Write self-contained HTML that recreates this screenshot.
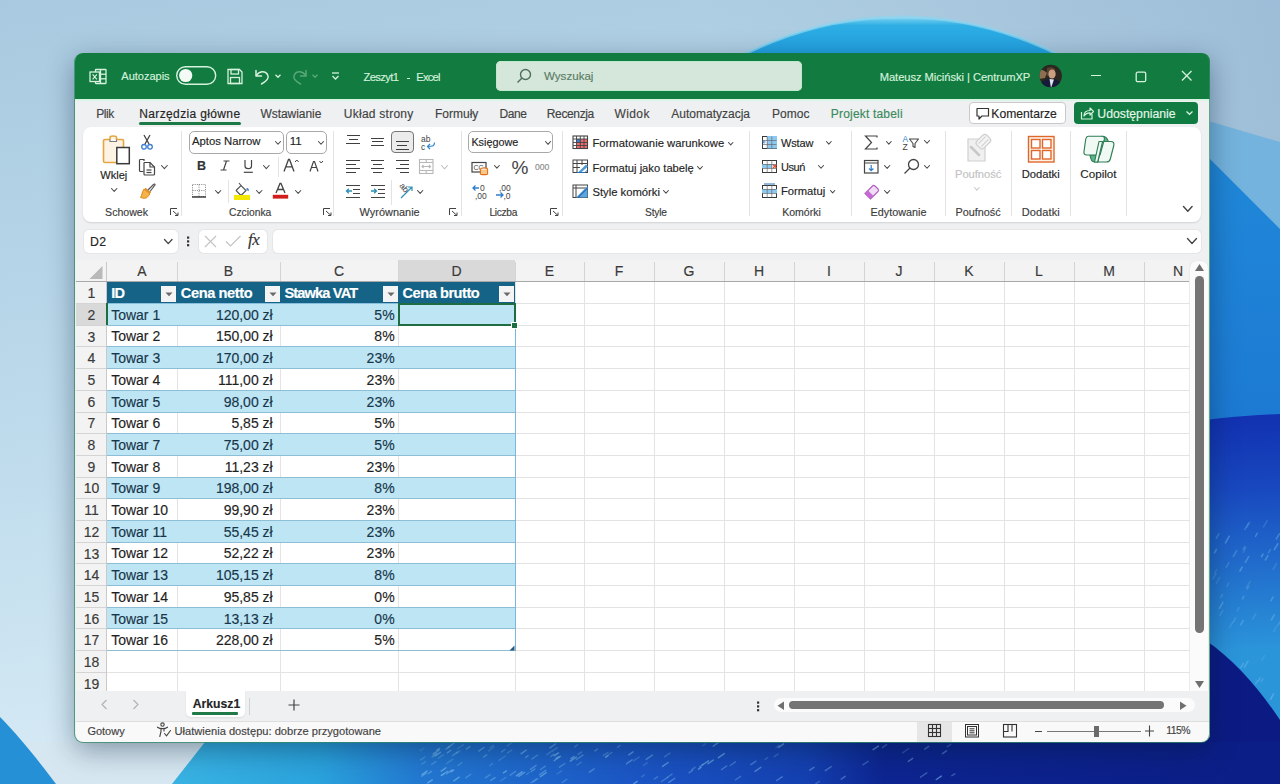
<!DOCTYPE html>
<html><head><meta charset="utf-8"><title>Excel</title>
<style>
html,body{margin:0;padding:0;}
body{width:1280px;height:784px;position:relative;overflow:hidden;font-family:"Liberation Sans",sans-serif;background:#b8d4e8;}
.r{position:absolute;}
.t{position:absolute;white-space:nowrap;line-height:normal;font-family:"Liberation Sans",sans-serif;-webkit-text-stroke:0.15px currentColor;}
svg.r{overflow:visible;}
</style></head><body>
<svg class="r" style="left:0;top:0" width="1280" height="784" viewBox="0 0 1280 784">
<defs>
<linearGradient id="bg0" x1="0" y1="0" x2="0.25" y2="1">
 <stop offset="0" stop-color="#a8c9df"/><stop offset="0.5" stop-color="#bcdaeb"/><stop offset="1" stop-color="#d9ecf6"/>
</linearGradient>
<linearGradient id="bgR" x1="0" y1="0" x2="1" y2="0">
 <stop offset="0" stop-color="#9dbbd5" stop-opacity="0"/><stop offset="0.55" stop-color="#9dbbd5" stop-opacity="0"/><stop offset="1" stop-color="#98b8d4" stop-opacity="0.8"/>
</linearGradient>
<linearGradient id="arcG" gradientUnits="userSpaceOnUse" x1="0" y1="17" x2="0" y2="60">
 <stop offset="0" stop-color="#9adbf2"/><stop offset="0.08" stop-color="#5cc4ec"/><stop offset="0.2" stop-color="#2eaee4"/><stop offset="1" stop-color="#1e9ddf"/>
</linearGradient>
<linearGradient id="p2" x1="0" y1="0" x2="0" y2="1">
 <stop offset="0" stop-color="#2088d8"/><stop offset="1" stop-color="#1766cc"/>
</linearGradient>
<linearGradient id="p3" gradientUnits="userSpaceOnUse" x1="1240" y1="420" x2="1250" y2="650">
 <stop offset="0" stop-color="#1232b2"/><stop offset="0.3" stop-color="#1848bf"/><stop offset="1" stop-color="#2b95da"/>
</linearGradient>
<linearGradient id="botB" x1="0" y1="0" x2="1" y2="0">
 <stop offset="0" stop-color="#2a9ad8"/><stop offset="0.14" stop-color="#38b2e2"/><stop offset="0.25" stop-color="#2aa2dc"/><stop offset="0.33" stop-color="#2277d0"/><stop offset="0.5" stop-color="#1b55c4"/><stop offset="0.63" stop-color="#1440b0"/><stop offset="0.69" stop-color="#0d2590"/><stop offset="1" stop-color="#0b1d86"/>
</linearGradient>
</defs>
<rect width="1280" height="784" fill="url(#bg0)"/>
<rect x="0" y="0" width="1280" height="784" fill="url(#bgR)"/>
<circle cx="901" cy="364" r="347" fill="url(#arcG)" stroke="#8ed4ef" stroke-width="3" stroke-opacity="0.75"/>
<path d="M1205 120 L1280 142 L1280 784 L1205 784 Z" fill="#74b3dd"/>
<path d="M1205 154 L1280 229 L1280 784 L1205 784 Z" fill="url(#p2)"/>
<path d="M1205 420 C1230 417 1255 415 1280 414 L1280 784 L1205 784 Z" fill="url(#p3)"/>
<path d="M1205 640 C1235 660 1260 690 1280 720 L1280 784 L1205 784 Z" fill="#0c1b84"/>
<rect x="0" y="742" width="1280" height="42" fill="url(#botB)"/>
<path d="M0 742 L205 742 L172 784 L0 784 Z" fill="#d6e7f1"/>
<line x1="594.9" y1="750.9" x2="597.6" y2="749.0" stroke="#7fc0f0" stroke-opacity="0.44" stroke-width="1.5" stroke-linecap="round"/><line x1="617.5" y1="747.3" x2="620.0" y2="745.5" stroke="#7fc0f0" stroke-opacity="0.40" stroke-width="1.5" stroke-linecap="round"/><line x1="457.7" y1="748.5" x2="463.4" y2="744.6" stroke="#7fc0f0" stroke-opacity="0.29" stroke-width="1.5" stroke-linecap="round"/><line x1="540.5" y1="769.5" x2="545.3" y2="766.2" stroke="#7fc0f0" stroke-opacity="0.39" stroke-width="1.5" stroke-linecap="round"/><line x1="947.2" y1="746.8" x2="950.7" y2="744.4" stroke="#7fc0f0" stroke-opacity="0.30" stroke-width="1.5" stroke-linecap="round"/><line x1="483.6" y1="757.0" x2="486.7" y2="754.9" stroke="#7fc0f0" stroke-opacity="0.45" stroke-width="1.5" stroke-linecap="round"/><line x1="765.0" y1="759.5" x2="767.7" y2="757.7" stroke="#7fc0f0" stroke-opacity="0.27" stroke-width="1.5" stroke-linecap="round"/><line x1="531.2" y1="771.5" x2="534.9" y2="769.0" stroke="#7fc0f0" stroke-opacity="0.45" stroke-width="1.5" stroke-linecap="round"/><line x1="664.7" y1="756.7" x2="669.9" y2="753.1" stroke="#7fc0f0" stroke-opacity="0.34" stroke-width="1.5" stroke-linecap="round"/><line x1="730.2" y1="765.5" x2="735.5" y2="761.8" stroke="#7fc0f0" stroke-opacity="0.35" stroke-width="1.5" stroke-linecap="round"/><line x1="441.2" y1="771.1" x2="445.9" y2="767.8" stroke="#7fc0f0" stroke-opacity="0.56" stroke-width="1.5" stroke-linecap="round"/><line x1="589.4" y1="772.1" x2="594.1" y2="768.9" stroke="#7fc0f0" stroke-opacity="0.41" stroke-width="1.5" stroke-linecap="round"/><line x1="778.6" y1="747.4" x2="783.6" y2="743.9" stroke="#7fc0f0" stroke-opacity="0.60" stroke-width="1.5" stroke-linecap="round"/><line x1="662.6" y1="766.4" x2="668.2" y2="762.5" stroke="#7fc0f0" stroke-opacity="0.55" stroke-width="1.5" stroke-linecap="round"/><line x1="570.3" y1="761.2" x2="576.3" y2="757.1" stroke="#7fc0f0" stroke-opacity="0.59" stroke-width="1.5" stroke-linecap="round"/><line x1="501.5" y1="751.9" x2="504.8" y2="749.6" stroke="#7fc0f0" stroke-opacity="0.42" stroke-width="1.5" stroke-linecap="round"/><line x1="646.2" y1="759.4" x2="652.4" y2="755.1" stroke="#7fc0f0" stroke-opacity="0.49" stroke-width="1.5" stroke-linecap="round"/><line x1="698.4" y1="769.1" x2="701.0" y2="767.3" stroke="#7fc0f0" stroke-opacity="0.56" stroke-width="1.5" stroke-linecap="round"/><line x1="841.2" y1="779.1" x2="845.2" y2="776.4" stroke="#7fc0f0" stroke-opacity="0.39" stroke-width="1.5" stroke-linecap="round"/><line x1="456.4" y1="753.1" x2="460.1" y2="750.6" stroke="#7fc0f0" stroke-opacity="0.27" stroke-width="1.5" stroke-linecap="round"/><line x1="420.1" y1="750.9" x2="424.0" y2="748.2" stroke="#7fc0f0" stroke-opacity="0.26" stroke-width="1.5" stroke-linecap="round"/><line x1="556.2" y1="758.5" x2="559.1" y2="756.6" stroke="#7fc0f0" stroke-opacity="0.55" stroke-width="1.5" stroke-linecap="round"/><line x1="466.4" y1="749.0" x2="469.8" y2="746.6" stroke="#7fc0f0" stroke-opacity="0.54" stroke-width="1.5" stroke-linecap="round"/><line x1="507.2" y1="745.9" x2="511.7" y2="742.8" stroke="#7fc0f0" stroke-opacity="0.30" stroke-width="1.5" stroke-linecap="round"/><line x1="713.3" y1="746.1" x2="719.6" y2="741.7" stroke="#7fc0f0" stroke-opacity="0.55" stroke-width="1.5" stroke-linecap="round"/><line x1="510.2" y1="775.1" x2="515.7" y2="771.3" stroke="#7fc0f0" stroke-opacity="0.37" stroke-width="1.5" stroke-linecap="round"/><line x1="540.4" y1="776.6" x2="546.3" y2="772.7" stroke="#7fc0f0" stroke-opacity="0.53" stroke-width="1.5" stroke-linecap="round"/><line x1="435.1" y1="755.9" x2="440.3" y2="752.3" stroke="#7fc0f0" stroke-opacity="0.58" stroke-width="1.5" stroke-linecap="round"/><line x1="661.5" y1="781.5" x2="667.7" y2="777.3" stroke="#7fc0f0" stroke-opacity="0.38" stroke-width="1.5" stroke-linecap="round"/><line x1="530.4" y1="769.3" x2="536.1" y2="765.4" stroke="#7fc0f0" stroke-opacity="0.42" stroke-width="1.5" stroke-linecap="round"/><line x1="776.7" y1="780.5" x2="782.1" y2="776.8" stroke="#7fc0f0" stroke-opacity="0.42" stroke-width="1.5" stroke-linecap="round"/><line x1="516.4" y1="775.8" x2="522.0" y2="771.9" stroke="#7fc0f0" stroke-opacity="0.59" stroke-width="1.5" stroke-linecap="round"/><line x1="633.8" y1="760.7" x2="639.1" y2="757.0" stroke="#7fc0f0" stroke-opacity="0.31" stroke-width="1.5" stroke-linecap="round"/><line x1="488.6" y1="750.9" x2="494.2" y2="747.0" stroke="#7fc0f0" stroke-opacity="0.30" stroke-width="1.5" stroke-linecap="round"/><line x1="427.7" y1="782.9" x2="432.2" y2="779.8" stroke="#7fc0f0" stroke-opacity="0.58" stroke-width="1.5" stroke-linecap="round"/><line x1="654.3" y1="779.0" x2="657.5" y2="776.8" stroke="#7fc0f0" stroke-opacity="0.34" stroke-width="1.5" stroke-linecap="round"/><line x1="578.2" y1="754.4" x2="581.6" y2="752.0" stroke="#7fc0f0" stroke-opacity="0.40" stroke-width="1.5" stroke-linecap="round"/><line x1="490.8" y1="780.5" x2="495.0" y2="777.6" stroke="#7fc0f0" stroke-opacity="0.45" stroke-width="1.5" stroke-linecap="round"/><line x1="908.3" y1="761.4" x2="912.7" y2="758.4" stroke="#7fc0f0" stroke-opacity="0.44" stroke-width="1.5" stroke-linecap="round"/><line x1="702.7" y1="745.7" x2="705.8" y2="743.6" stroke="#7fc0f0" stroke-opacity="0.25" stroke-width="1.5" stroke-linecap="round"/><line x1="699.9" y1="766.7" x2="702.7" y2="764.7" stroke="#7fc0f0" stroke-opacity="0.45" stroke-width="1.5" stroke-linecap="round"/><line x1="554.2" y1="755.8" x2="558.6" y2="752.8" stroke="#7fc0f0" stroke-opacity="0.45" stroke-width="1.5" stroke-linecap="round"/><line x1="750.8" y1="764.7" x2="755.9" y2="761.2" stroke="#7fc0f0" stroke-opacity="0.41" stroke-width="1.5" stroke-linecap="round"/><line x1="708.0" y1="763.6" x2="713.2" y2="760.1" stroke="#7fc0f0" stroke-opacity="0.56" stroke-width="1.5" stroke-linecap="round"/><line x1="549.9" y1="747.9" x2="555.5" y2="744.0" stroke="#7fc0f0" stroke-opacity="0.56" stroke-width="1.5" stroke-linecap="round"/><line x1="503.4" y1="772.9" x2="506.4" y2="770.9" stroke="#7fc0f0" stroke-opacity="0.56" stroke-width="1.5" stroke-linecap="round"/><line x1="942.5" y1="753.6" x2="946.5" y2="750.8" stroke="#7fc0f0" stroke-opacity="0.42" stroke-width="1.5" stroke-linecap="round"/><line x1="525.7" y1="757.4" x2="528.2" y2="755.7" stroke="#7fc0f0" stroke-opacity="0.44" stroke-width="1.5" stroke-linecap="round"/><line x1="951.9" y1="775.7" x2="954.8" y2="773.8" stroke="#7fc0f0" stroke-opacity="0.34" stroke-width="1.5" stroke-linecap="round"/><line x1="441.4" y1="775.4" x2="444.3" y2="773.4" stroke="#7fc0f0" stroke-opacity="0.40" stroke-width="1.5" stroke-linecap="round"/><line x1="500.7" y1="780.8" x2="505.9" y2="777.3" stroke="#7fc0f0" stroke-opacity="0.28" stroke-width="1.5" stroke-linecap="round"/><line x1="451.1" y1="771.8" x2="453.8" y2="770.0" stroke="#7fc0f0" stroke-opacity="0.58" stroke-width="1.5" stroke-linecap="round"/><line x1="882.4" y1="747.6" x2="886.6" y2="744.7" stroke="#7fc0f0" stroke-opacity="0.37" stroke-width="1.5" stroke-linecap="round"/><line x1="489.8" y1="765.5" x2="492.6" y2="763.6" stroke="#7fc0f0" stroke-opacity="0.31" stroke-width="1.5" stroke-linecap="round"/><line x1="447.2" y1="752.9" x2="450.8" y2="750.4" stroke="#7fc0f0" stroke-opacity="0.52" stroke-width="1.5" stroke-linecap="round"/><line x1="428.3" y1="773.6" x2="431.4" y2="771.4" stroke="#7fc0f0" stroke-opacity="0.42" stroke-width="1.5" stroke-linecap="round"/><line x1="924.7" y1="749.1" x2="928.8" y2="746.3" stroke="#7fc0f0" stroke-opacity="0.42" stroke-width="1.5" stroke-linecap="round"/><line x1="490.1" y1="747.8" x2="493.5" y2="745.4" stroke="#7fc0f0" stroke-opacity="0.31" stroke-width="1.5" stroke-linecap="round"/><line x1="465.6" y1="777.8" x2="470.7" y2="774.3" stroke="#7fc0f0" stroke-opacity="0.35" stroke-width="1.5" stroke-linecap="round"/><line x1="550.8" y1="756.4" x2="553.8" y2="754.3" stroke="#7fc0f0" stroke-opacity="0.41" stroke-width="1.5" stroke-linecap="round"/><line x1="562.2" y1="782.5" x2="566.7" y2="779.4" stroke="#7fc0f0" stroke-opacity="0.34" stroke-width="1.5" stroke-linecap="round"/><line x1="420.6" y1="759.9" x2="425.0" y2="756.9" stroke="#7fc0f0" stroke-opacity="0.32" stroke-width="1.5" stroke-linecap="round"/><line x1="432.1" y1="756.9" x2="436.9" y2="753.6" stroke="#7fc0f0" stroke-opacity="0.44" stroke-width="1.5" stroke-linecap="round"/><line x1="825.3" y1="770.6" x2="831.2" y2="766.6" stroke="#7fc0f0" stroke-opacity="0.39" stroke-width="1.5" stroke-linecap="round"/><line x1="702.8" y1="764.7" x2="708.4" y2="760.8" stroke="#7fc0f0" stroke-opacity="0.54" stroke-width="1.5" stroke-linecap="round"/><line x1="735.4" y1="779.8" x2="740.6" y2="776.3" stroke="#7fc0f0" stroke-opacity="0.33" stroke-width="1.5" stroke-linecap="round"/><line x1="436.8" y1="750.2" x2="439.6" y2="748.3" stroke="#7fc0f0" stroke-opacity="0.54" stroke-width="1.5" stroke-linecap="round"/><line x1="721.6" y1="769.5" x2="726.7" y2="766.0" stroke="#7fc0f0" stroke-opacity="0.42" stroke-width="1.5" stroke-linecap="round"/><line x1="421.8" y1="776.1" x2="426.2" y2="773.1" stroke="#7fc0f0" stroke-opacity="0.44" stroke-width="1.5" stroke-linecap="round"/><line x1="776.0" y1="747.6" x2="779.4" y2="745.2" stroke="#7fc0f0" stroke-opacity="0.28" stroke-width="1.5" stroke-linecap="round"/><line x1="626.6" y1="763.7" x2="632.1" y2="759.9" stroke="#7fc0f0" stroke-opacity="0.47" stroke-width="1.5" stroke-linecap="round"/><line x1="557.1" y1="774.0" x2="561.8" y2="770.8" stroke="#7fc0f0" stroke-opacity="0.25" stroke-width="1.5" stroke-linecap="round"/><line x1="452.8" y1="755.5" x2="457.9" y2="751.9" stroke="#7fc0f0" stroke-opacity="0.49" stroke-width="1.5" stroke-linecap="round"/><line x1="577.1" y1="765.1" x2="581.3" y2="762.2" stroke="#7fc0f0" stroke-opacity="0.29" stroke-width="1.5" stroke-linecap="round"/><line x1="902.6" y1="752.8" x2="908.7" y2="748.5" stroke="#7fc0f0" stroke-opacity="0.26" stroke-width="1.5" stroke-linecap="round"/><line x1="667.8" y1="777.0" x2="672.0" y2="774.1" stroke="#7fc0f0" stroke-opacity="0.34" stroke-width="1.5" stroke-linecap="round"/><line x1="533.3" y1="781.9" x2="538.0" y2="778.6" stroke="#7fc0f0" stroke-opacity="0.30" stroke-width="1.5" stroke-linecap="round"/><line x1="862.9" y1="764.8" x2="868.1" y2="761.3" stroke="#7fc0f0" stroke-opacity="0.33" stroke-width="1.5" stroke-linecap="round"/><line x1="421.9" y1="764.2" x2="425.5" y2="761.7" stroke="#7fc0f0" stroke-opacity="0.30" stroke-width="1.5" stroke-linecap="round"/><line x1="605.7" y1="757.3" x2="608.1" y2="755.7" stroke="#7fc0f0" stroke-opacity="0.51" stroke-width="1.5" stroke-linecap="round"/><line x1="873.1" y1="749.7" x2="878.4" y2="746.1" stroke="#7fc0f0" stroke-opacity="0.57" stroke-width="1.5" stroke-linecap="round"/><line x1="576.5" y1="759.5" x2="582.9" y2="755.1" stroke="#7fc0f0" stroke-opacity="0.46" stroke-width="1.5" stroke-linecap="round"/><line x1="446.1" y1="749.0" x2="449.6" y2="746.5" stroke="#7fc0f0" stroke-opacity="0.58" stroke-width="1.5" stroke-linecap="round"/><line x1="554.6" y1="755.4" x2="557.8" y2="753.2" stroke="#7fc0f0" stroke-opacity="0.38" stroke-width="1.5" stroke-linecap="round"/><line x1="936.3" y1="779.5" x2="941.3" y2="776.1" stroke="#7fc0f0" stroke-opacity="0.57" stroke-width="1.5" stroke-linecap="round"/><line x1="446.7" y1="773.6" x2="452.1" y2="769.8" stroke="#7fc0f0" stroke-opacity="0.48" stroke-width="1.5" stroke-linecap="round"/><line x1="574.6" y1="746.9" x2="577.5" y2="744.9" stroke="#7fc0f0" stroke-opacity="0.42" stroke-width="1.5" stroke-linecap="round"/><line x1="605.6" y1="756.6" x2="611.9" y2="752.3" stroke="#7fc0f0" stroke-opacity="0.34" stroke-width="1.5" stroke-linecap="round"/><line x1="774.2" y1="756.7" x2="778.2" y2="754.0" stroke="#7fc0f0" stroke-opacity="0.31" stroke-width="1.5" stroke-linecap="round"/><line x1="507.3" y1="753.1" x2="511.7" y2="750.1" stroke="#7fc0f0" stroke-opacity="0.33" stroke-width="1.5" stroke-linecap="round"/><line x1="559.5" y1="767.2" x2="564.9" y2="763.5" stroke="#7fc0f0" stroke-opacity="0.39" stroke-width="1.5" stroke-linecap="round"/><line x1="643.5" y1="765.4" x2="647.2" y2="762.9" stroke="#7fc0f0" stroke-opacity="0.27" stroke-width="1.5" stroke-linecap="round"/><line x1="691.8" y1="769.6" x2="695.1" y2="767.3" stroke="#7fc0f0" stroke-opacity="0.34" stroke-width="1.5" stroke-linecap="round"/><line x1="554.2" y1="760.6" x2="560.4" y2="756.3" stroke="#7fc0f0" stroke-opacity="0.55" stroke-width="1.5" stroke-linecap="round"/><line x1="920.5" y1="777.2" x2="926.8" y2="772.9" stroke="#7fc0f0" stroke-opacity="0.34" stroke-width="1.5" stroke-linecap="round"/><line x1="478.9" y1="751.0" x2="484.0" y2="747.5" stroke="#7fc0f0" stroke-opacity="0.58" stroke-width="1.5" stroke-linecap="round"/><line x1="809.7" y1="770.2" x2="814.0" y2="767.3" stroke="#7fc0f0" stroke-opacity="0.44" stroke-width="1.5" stroke-linecap="round"/><line x1="441.4" y1="775.5" x2="447.4" y2="771.3" stroke="#7fc0f0" stroke-opacity="0.48" stroke-width="1.5" stroke-linecap="round"/><line x1="458.0" y1="765.5" x2="461.9" y2="762.7" stroke="#7fc0f0" stroke-opacity="0.33" stroke-width="1.5" stroke-linecap="round"/><line x1="668.8" y1="782.4" x2="674.7" y2="778.3" stroke="#7fc0f0" stroke-opacity="0.42" stroke-width="1.5" stroke-linecap="round"/><line x1="546.8" y1="754.6" x2="552.0" y2="751.0" stroke="#7fc0f0" stroke-opacity="0.36" stroke-width="1.5" stroke-linecap="round"/><line x1="431.8" y1="764.4" x2="435.8" y2="761.6" stroke="#7fc0f0" stroke-opacity="0.34" stroke-width="1.5" stroke-linecap="round"/><line x1="438.4" y1="758.2" x2="443.5" y2="754.7" stroke="#7fc0f0" stroke-opacity="0.32" stroke-width="1.5" stroke-linecap="round"/><line x1="530.8" y1="782.8" x2="536.5" y2="778.9" stroke="#7fc0f0" stroke-opacity="0.33" stroke-width="1.5" stroke-linecap="round"/><line x1="539.6" y1="774.7" x2="545.8" y2="770.4" stroke="#7fc0f0" stroke-opacity="0.42" stroke-width="1.5" stroke-linecap="round"/><line x1="521.1" y1="753.7" x2="526.2" y2="750.2" stroke="#7fc0f0" stroke-opacity="0.58" stroke-width="1.5" stroke-linecap="round"/><line x1="499.0" y1="760.3" x2="505.3" y2="756.0" stroke="#7fc0f0" stroke-opacity="0.30" stroke-width="1.5" stroke-linecap="round"/><line x1="448.0" y1="747.3" x2="454.0" y2="743.2" stroke="#7fc0f0" stroke-opacity="0.56" stroke-width="1.5" stroke-linecap="round"/><line x1="815.7" y1="783.9" x2="819.4" y2="781.3" stroke="#7fc0f0" stroke-opacity="0.31" stroke-width="1.5" stroke-linecap="round"/><line x1="571.1" y1="758.7" x2="574.0" y2="756.7" stroke="#7fc0f0" stroke-opacity="0.59" stroke-width="1.5" stroke-linecap="round"/><line x1="532.0" y1="758.9" x2="537.7" y2="755.0" stroke="#7fc0f0" stroke-opacity="0.40" stroke-width="1.5" stroke-linecap="round"/><line x1="446.6" y1="763.5" x2="452.7" y2="759.3" stroke="#7fc0f0" stroke-opacity="0.32" stroke-width="1.5" stroke-linecap="round"/><line x1="641.8" y1="776.7" x2="644.4" y2="774.9" stroke="#7fc0f0" stroke-opacity="0.26" stroke-width="1.5" stroke-linecap="round"/><line x1="453.8" y1="780.9" x2="459.2" y2="777.2" stroke="#7fc0f0" stroke-opacity="0.56" stroke-width="1.5" stroke-linecap="round"/><line x1="603.1" y1="755.6" x2="608.0" y2="752.3" stroke="#7fc0f0" stroke-opacity="0.34" stroke-width="1.5" stroke-linecap="round"/><line x1="422.0" y1="774.5" x2="427.0" y2="771.1" stroke="#7fc0f0" stroke-opacity="0.58" stroke-width="1.5" stroke-linecap="round"/><line x1="433.1" y1="754.1" x2="439.3" y2="749.8" stroke="#7fc0f0" stroke-opacity="0.58" stroke-width="1.5" stroke-linecap="round"/><line x1="628.7" y1="754.8" x2="633.1" y2="751.8" stroke="#7fc0f0" stroke-opacity="0.57" stroke-width="1.5" stroke-linecap="round"/><line x1="518.8" y1="776.3" x2="524.5" y2="772.4" stroke="#7fc0f0" stroke-opacity="0.52" stroke-width="1.5" stroke-linecap="round"/><line x1="526.5" y1="774.4" x2="529.2" y2="772.5" stroke="#7fc0f0" stroke-opacity="0.26" stroke-width="1.5" stroke-linecap="round"/><line x1="718.4" y1="757.7" x2="724.3" y2="753.6" stroke="#7fc0f0" stroke-opacity="0.60" stroke-width="1.5" stroke-linecap="round"/><line x1="689.2" y1="772.7" x2="692.5" y2="770.4" stroke="#7fc0f0" stroke-opacity="0.40" stroke-width="1.5" stroke-linecap="round"/><line x1="755.0" y1="771.3" x2="760.8" y2="767.3" stroke="#7fc0f0" stroke-opacity="0.48" stroke-width="1.5" stroke-linecap="round"/><line x1="485.4" y1="777.8" x2="490.1" y2="774.6" stroke="#7fc0f0" stroke-opacity="0.38" stroke-width="1.5" stroke-linecap="round"/><line x1="552.5" y1="751.0" x2="557.2" y2="747.7" stroke="#7fc0f0" stroke-opacity="0.36" stroke-width="1.5" stroke-linecap="round"/><line x1="633.9" y1="783.7" x2="637.2" y2="781.4" stroke="#7fc0f0" stroke-opacity="0.53" stroke-width="1.5" stroke-linecap="round"/><line x1="1244.3" y1="667.4" x2="1247.9" y2="661.3" stroke="#6fb8ec" stroke-opacity="0.47" stroke-width="1.6" stroke-linecap="round"/><line x1="1214.7" y1="572.9" x2="1216.5" y2="569.8" stroke="#6fb8ec" stroke-opacity="0.26" stroke-width="1.6" stroke-linecap="round"/><line x1="1278.2" y1="625.0" x2="1282.0" y2="618.5" stroke="#6fb8ec" stroke-opacity="0.31" stroke-width="1.6" stroke-linecap="round"/><line x1="1270.9" y1="600.8" x2="1273.0" y2="597.2" stroke="#6fb8ec" stroke-opacity="0.43" stroke-width="1.6" stroke-linecap="round"/><line x1="1276.3" y1="539.0" x2="1279.3" y2="534.0" stroke="#6fb8ec" stroke-opacity="0.39" stroke-width="1.6" stroke-linecap="round"/><line x1="1226.8" y1="586.4" x2="1228.7" y2="583.2" stroke="#6fb8ec" stroke-opacity="0.26" stroke-width="1.6" stroke-linecap="round"/><line x1="1229.3" y1="627.9" x2="1232.5" y2="622.6" stroke="#6fb8ec" stroke-opacity="0.26" stroke-width="1.6" stroke-linecap="round"/><line x1="1212.8" y1="578.9" x2="1216.0" y2="573.5" stroke="#6fb8ec" stroke-opacity="0.26" stroke-width="1.6" stroke-linecap="round"/><line x1="1233.2" y1="556.6" x2="1236.7" y2="550.7" stroke="#6fb8ec" stroke-opacity="0.36" stroke-width="1.6" stroke-linecap="round"/><line x1="1216.3" y1="538.2" x2="1218.8" y2="534.0" stroke="#6fb8ec" stroke-opacity="0.37" stroke-width="1.6" stroke-linecap="round"/><line x1="1255.5" y1="536.4" x2="1257.4" y2="533.2" stroke="#6fb8ec" stroke-opacity="0.41" stroke-width="1.6" stroke-linecap="round"/><line x1="1239.9" y1="571.0" x2="1242.1" y2="567.1" stroke="#6fb8ec" stroke-opacity="0.49" stroke-width="1.6" stroke-linecap="round"/><line x1="1233.2" y1="622.0" x2="1235.6" y2="617.9" stroke="#6fb8ec" stroke-opacity="0.32" stroke-width="1.6" stroke-linecap="round"/><line x1="1270.8" y1="699.4" x2="1273.2" y2="695.3" stroke="#6fb8ec" stroke-opacity="0.26" stroke-width="1.6" stroke-linecap="round"/><line x1="1261.5" y1="556.7" x2="1263.0" y2="554.1" stroke="#6fb8ec" stroke-opacity="0.47" stroke-width="1.6" stroke-linecap="round"/><line x1="1240.8" y1="667.7" x2="1243.3" y2="663.4" stroke="#6fb8ec" stroke-opacity="0.46" stroke-width="1.6" stroke-linecap="round"/><line x1="1243.3" y1="549.3" x2="1244.9" y2="546.6" stroke="#6fb8ec" stroke-opacity="0.37" stroke-width="1.6" stroke-linecap="round"/><line x1="1255.6" y1="683.8" x2="1257.3" y2="680.8" stroke="#6fb8ec" stroke-opacity="0.39" stroke-width="1.6" stroke-linecap="round"/><line x1="1237.2" y1="610.8" x2="1239.1" y2="607.6" stroke="#6fb8ec" stroke-opacity="0.28" stroke-width="1.6" stroke-linecap="round"/><line x1="1219.4" y1="608.3" x2="1222.9" y2="602.3" stroke="#6fb8ec" stroke-opacity="0.49" stroke-width="1.6" stroke-linecap="round"/><line x1="1225.4" y1="542.8" x2="1229.3" y2="536.2" stroke="#6fb8ec" stroke-opacity="0.49" stroke-width="1.6" stroke-linecap="round"/><line x1="1244.8" y1="529.6" x2="1248.6" y2="523.1" stroke="#6fb8ec" stroke-opacity="0.32" stroke-width="1.6" stroke-linecap="round"/><line x1="1273.5" y1="631.7" x2="1277.0" y2="625.6" stroke="#6fb8ec" stroke-opacity="0.25" stroke-width="1.6" stroke-linecap="round"/><line x1="1265.4" y1="560.0" x2="1267.9" y2="555.7" stroke="#6fb8ec" stroke-opacity="0.45" stroke-width="1.6" stroke-linecap="round"/><line x1="1268.4" y1="552.9" x2="1270.4" y2="549.5" stroke="#6fb8ec" stroke-opacity="0.32" stroke-width="1.6" stroke-linecap="round"/><line x1="1247.2" y1="589.0" x2="1249.0" y2="586.0" stroke="#6fb8ec" stroke-opacity="0.27" stroke-width="1.6" stroke-linecap="round"/><line x1="1261.3" y1="681.5" x2="1262.9" y2="678.8" stroke="#6fb8ec" stroke-opacity="0.37" stroke-width="1.6" stroke-linecap="round"/><line x1="1263.5" y1="526.9" x2="1267.1" y2="520.8" stroke="#6fb8ec" stroke-opacity="0.24" stroke-width="1.6" stroke-linecap="round"/><line x1="1252.8" y1="619.0" x2="1255.8" y2="613.8" stroke="#6fb8ec" stroke-opacity="0.29" stroke-width="1.6" stroke-linecap="round"/><line x1="1240.6" y1="624.9" x2="1243.1" y2="620.5" stroke="#6fb8ec" stroke-opacity="0.40" stroke-width="1.6" stroke-linecap="round"/><line x1="1242.4" y1="598.9" x2="1243.9" y2="596.3" stroke="#6fb8ec" stroke-opacity="0.39" stroke-width="1.6" stroke-linecap="round"/><line x1="1245.3" y1="562.3" x2="1248.7" y2="556.6" stroke="#6fb8ec" stroke-opacity="0.43" stroke-width="1.6" stroke-linecap="round"/><line x1="1243.2" y1="552.3" x2="1245.8" y2="547.8" stroke="#6fb8ec" stroke-opacity="0.23" stroke-width="1.6" stroke-linecap="round"/><line x1="1220.7" y1="597.5" x2="1222.5" y2="594.6" stroke="#6fb8ec" stroke-opacity="0.33" stroke-width="1.6" stroke-linecap="round"/><line x1="1246.7" y1="527.3" x2="1249.8" y2="522.1" stroke="#6fb8ec" stroke-opacity="0.22" stroke-width="1.6" stroke-linecap="round"/><line x1="1261.9" y1="660.0" x2="1264.7" y2="655.3" stroke="#6fb8ec" stroke-opacity="0.22" stroke-width="1.6" stroke-linecap="round"/><line x1="1246.3" y1="588.0" x2="1250.1" y2="581.4" stroke="#6fb8ec" stroke-opacity="0.24" stroke-width="1.6" stroke-linecap="round"/><line x1="1270.3" y1="699.3" x2="1273.6" y2="693.6" stroke="#6fb8ec" stroke-opacity="0.44" stroke-width="1.6" stroke-linecap="round"/><line x1="1274.3" y1="549.7" x2="1277.8" y2="543.8" stroke="#6fb8ec" stroke-opacity="0.48" stroke-width="1.6" stroke-linecap="round"/><line x1="1216.5" y1="583.2" x2="1219.8" y2="577.4" stroke="#6fb8ec" stroke-opacity="0.25" stroke-width="1.6" stroke-linecap="round"/><line x1="1273.0" y1="569.5" x2="1276.5" y2="563.5" stroke="#6fb8ec" stroke-opacity="0.24" stroke-width="1.6" stroke-linecap="round"/><line x1="1226.2" y1="567.3" x2="1228.9" y2="562.6" stroke="#6fb8ec" stroke-opacity="0.30" stroke-width="1.6" stroke-linecap="round"/><line x1="1214.5" y1="552.8" x2="1216.4" y2="549.5" stroke="#6fb8ec" stroke-opacity="0.48" stroke-width="1.6" stroke-linecap="round"/><line x1="1258.2" y1="681.2" x2="1260.1" y2="677.9" stroke="#6fb8ec" stroke-opacity="0.44" stroke-width="1.6" stroke-linecap="round"/><line x1="1219.8" y1="615.5" x2="1222.9" y2="610.3" stroke="#6fb8ec" stroke-opacity="0.31" stroke-width="1.6" stroke-linecap="round"/><line x1="1271.4" y1="619.9" x2="1274.3" y2="614.9" stroke="#6fb8ec" stroke-opacity="0.46" stroke-width="1.6" stroke-linecap="round"/>
<path d="M0 717 C18 735 38 760 56 784 L0 784 Z" fill="#2590d6"/>
</svg>
<div class="r" style="left:75px;top:53px;width:1135px;height:689px;border-radius:8px;background:#eef0f1;box-shadow:0 8px 28px rgba(0,25,50,0.40);overflow:hidden"></div>
<div class="r" style="left:75px;top:53px;width:1135px;height:46px;background:#127b40;border-radius:8px 8px 0 0;"></div>
<div class="r" style="left:75px;top:99px;width:1135px;height:28px;background:#eef0f1;"></div>
<div class="r" style="left:75px;top:99px;width:1135px;height:1.5px;background:#d9f3e4;"></div>
<svg class="r" style="left:89px;top:68px;" width="18" height="17" viewBox="0 0 18 17"><g fill="none" stroke="#d6f2de" stroke-width="1.3">
<rect x="6.5" y="1.5" width="10.5" height="14" rx="0.5"/>
<line x1="11.5" y1="1.5" x2="11.5" y2="15.5"/><line x1="6.5" y1="6.2" x2="17" y2="6.2"/><line x1="6.5" y1="10.8" x2="17" y2="10.8"/>
</g><rect x="1" y="4" width="9.5" height="9.5" fill="#127b40" stroke="#d6f2de" stroke-width="1.3"/>
<path d="M3.6 6.3 L7.9 11.3 M7.9 6.3 L3.6 11.3" stroke="#d6f2de" stroke-width="1.2"/></svg>
<span class="t" style="left:121.30px;top:70.08px;font-size:11.0px;color:#d6f2de;">Autozapis</span>
<svg class="r" style="left:175px;top:65px;" width="43" height="21" viewBox="0 0 43 21"><rect x="1.7" y="1.7" width="39" height="17.6" rx="8.8" fill="none" stroke="#d6f2de" stroke-width="1.4"/>
<circle cx="10.7" cy="10.5" r="6.6" fill="#f4fbf6"/></svg>
<svg class="r" style="left:226px;top:68px;" width="18" height="17" viewBox="0 0 18 17"><g fill="none" stroke="#d6f2de" stroke-width="1.3">
<path d="M2 1.5 H13.5 L16 4 V15.5 H2 Z"/><rect x="5" y="1.5" width="7.5" height="4.5"/><rect x="4.5" y="9.5" width="9" height="6"/>
</g></svg>
<svg class="r" style="left:253px;top:67px;" width="20" height="19" viewBox="0 0 20 19"><g fill="none" stroke="#d6f2de" stroke-width="1.5" stroke-linecap="round" stroke-linejoin="round">
<path d="M3 3.5 V9 H8.5"/><path d="M3.5 8.5 C6 4 12 3.5 14.5 7.5 C16.5 11 14 14 8.5 17"/>
</g></svg>
<svg class="r" style="left:274px;top:73px;" width="8" height="6" viewBox="0 0 8 6"><path d="M1.5 1.8 L4 4.3 L6.5 1.8" fill="none" stroke="#d6f2de" stroke-width="1.3"/></svg>
<svg class="r" style="left:290px;top:67px;" width="20" height="19" viewBox="0 0 20 19"><g fill="none" stroke="#5aa878" stroke-width="1.5" stroke-linecap="round" stroke-linejoin="round">
<path d="M16 3.5 V9 H10.5"/><path d="M15.5 8.5 C13 4 7 3.5 4.5 7.5 C2.5 11 5 14 10.5 17"/>
</g></svg>
<svg class="r" style="left:311px;top:73px;" width="8" height="6" viewBox="0 0 8 6"><path d="M1.5 1.8 L4 4.3 L6.5 1.8" fill="none" stroke="#5aa878" stroke-width="1.3"/></svg>
<svg class="r" style="left:330px;top:71px;" width="11" height="10" viewBox="0 0 11 10"><g fill="none" stroke="#d6f2de" stroke-width="1.3"><line x1="2" y1="2" x2="9" y2="2"/><path d="M2.5 5 L5.5 8 L8.5 5"/></g></svg>
<span class="t" style="left:363.40px;top:71.03px;font-size:11.16px;color:#d6f2de;letter-spacing:-0.575px;">Zeszyt1</span>
<div class="r" style="left:406.5px;top:77.5px;width:3.3px;height:1.2px;background:#d6f2de;"></div>
<span class="t" style="left:416.30px;top:71.03px;font-size:11.16px;color:#d6f2de;letter-spacing:-0.787px;">Excel</span>
<div class="r" style="left:496px;top:61px;width:306px;height:30px;background:#d5e7da;border-radius:5px;box-shadow:inset 0 0 0 1px #bfe8cd;"></div>
<svg class="r" style="left:515px;top:67px;" width="18" height="18" viewBox="0 0 18 18"><g fill="none" stroke="#4f6f5a" stroke-width="1.4"><circle cx="10.5" cy="7.5" r="5"/><line x1="7" y1="11" x2="2.5" y2="15.5"/></g></svg>
<span class="t" style="left:544.00px;top:69.74px;font-size:11.59px;color:#5a7c66;">Wyszukaj</span>
<span class="t" style="left:879.70px;top:70.73px;font-size:11.16px;color:#d6f2de;letter-spacing:-0.041px;">Mateusz Miciński | CentrumXP</span>
<svg class="r" style="left:1039px;top:64px;" width="24" height="24" viewBox="0 0 24 24"><defs><clipPath id="av"><circle cx="11.7" cy="12" r="11.2"/></clipPath></defs>
<g clip-path="url(#av)">
<rect x="0" y="0" width="24" height="24" fill="#2a2620"/>
<path d="M0 6 C3 5 6 7 8 9 L6 14 L0 15Z" fill="#8a7050"/>
<path d="M8 4 C10 3 14 3 16 5 L17 12 L8 12Z" fill="#5a4030"/>
<path d="M1 24 C2 17 6 15 12 15 C18 15 22 17 23 24 Z" fill="#161a38"/>
<path d="M10.5 15 L12 24 L15 15.5 Z" fill="#dde6f0"/>
<ellipse cx="13" cy="10" rx="3.6" ry="4.6" fill="#c8a080"/>
</g></svg>
<div class="r" style="left:1091px;top:75px;width:10px;height:1.3px;background:#d6f2de;"></div>
<svg class="r" style="left:1135px;top:71px;" width="12" height="12" viewBox="0 0 12 12"><rect x="1.2" y="1.2" width="9.5" height="9.5" rx="1.5" fill="none" stroke="#d6f2de" stroke-width="1.3"/></svg>
<svg class="r" style="left:1181px;top:70px;" width="12" height="12" viewBox="0 0 12 12"><path d="M1 1 L10.5 10.5 M10.5 1 L1 10.5" stroke="#d6f2de" stroke-width="1.3"/></svg>
<span class="t" style="left:96.30px;top:107.26px;font-size:12px;color:#424242;letter-spacing:-0.467px;">Plik</span>
<span class="t" style="left:139.30px;top:107.26px;font-size:12px;color:#242424;letter-spacing:0.360px;">Narzędzia główne</span>
<span class="t" style="left:260.50px;top:107.26px;font-size:12px;color:#424242;letter-spacing:-0.061px;">Wstawianie</span>
<span class="t" style="left:343.80px;top:107.26px;font-size:12px;color:#424242;letter-spacing:0.255px;">Układ strony</span>
<span class="t" style="left:435.00px;top:107.26px;font-size:12px;color:#424242;">Formuły</span>
<span class="t" style="left:499.50px;top:107.26px;font-size:12px;color:#424242;letter-spacing:-0.400px;">Dane</span>
<span class="t" style="left:546.80px;top:107.26px;font-size:12px;color:#424242;letter-spacing:-0.364px;">Recenzja</span>
<span class="t" style="left:614.50px;top:107.26px;font-size:12px;color:#424242;letter-spacing:0.400px;">Widok</span>
<span class="t" style="left:671.30px;top:107.26px;font-size:12px;color:#424242;">Automatyzacja</span>
<span class="t" style="left:772.00px;top:107.26px;font-size:12px;color:#424242;letter-spacing:0.037px;">Pomoc</span>
<span class="t" style="left:830.80px;top:107.26px;font-size:12px;color:#3c8a5c;letter-spacing:0.188px;">Projekt tabeli</span>
<div class="r" style="left:139px;top:122px;width:102px;height:2.6px;background:#1c7a46;border-radius:2px;"></div>
<div class="r" style="left:969px;top:102px;width:97px;height:22px;background:#fff;border:1px solid #c9c9c9;box-sizing:border-box;border-radius:4px;"></div>
<svg class="r" style="left:975px;top:106px;" width="16" height="15" viewBox="0 0 16 15"><path d="M2 2.5 H13.5 V10 H7 L4 13 V10 H2 Z" fill="none" stroke="#333" stroke-width="1.2" stroke-linejoin="round"/></svg>
<span class="t" style="left:991.30px;top:106.72px;font-size:12.15px;color:#242424;">Komentarze</span>
<div class="r" style="left:1074px;top:102px;width:124px;height:22px;background:#107c41;border-radius:4px;"></div>
<svg class="r" style="left:1079px;top:105px;" width="16" height="16" viewBox="0 0 16 16"><g fill="none" stroke="#d6f2de" stroke-width="1.2" stroke-linejoin="round">
<path d="M2.5 7 V14 H13 V9"/><path d="M5 11 C5 7 8 5.5 11 5.5 V3 L14.5 6.5 L11 10 V7.8 C8.8 7.8 6.5 8.6 5 11Z"/></g></svg>
<span class="t" style="left:1097.30px;top:106.70px;font-size:12.28px;color:#e6f6ea;letter-spacing:-0.013px;">Udostępnianie</span>
<svg class="r" style="left:1185px;top:110px;" width="9" height="6" viewBox="0 0 9 6"><path d="M1.5 1.5 L4.5 4.3 L7.5 1.5" fill="none" stroke="#d6f2de" stroke-width="1.3"/></svg>
<div class="r" style="left:83px;top:127px;width:1118px;height:95px;background:#fff;border-radius:8px;box-shadow:0 1px 2px rgba(0,0,0,0.13);"></div>
<div class="r" style="left:180.5px;top:131px;width:1px;height:85px;background:#e3e3e3;"></div>
<div class="r" style="left:333.3px;top:131px;width:1px;height:85px;background:#e3e3e3;"></div>
<div class="r" style="left:460.5px;top:131px;width:1px;height:85px;background:#e3e3e3;"></div>
<div class="r" style="left:561.5px;top:131px;width:1px;height:85px;background:#e3e3e3;"></div>
<div class="r" style="left:749.3px;top:131px;width:1px;height:85px;background:#e3e3e3;"></div>
<div class="r" style="left:851.4px;top:131px;width:1px;height:85px;background:#e3e3e3;"></div>
<div class="r" style="left:944.6px;top:131px;width:1px;height:85px;background:#e3e3e3;"></div>
<div class="r" style="left:1011.4px;top:131px;width:1px;height:85px;background:#e3e3e3;"></div>
<div class="r" style="left:1070.2px;top:131px;width:1px;height:85px;background:#e3e3e3;"></div>
<div class="r" style="left:1126.4px;top:131px;width:1px;height:85px;background:#e3e3e3;"></div>
<span class="t" style="left:105.10px;top:206.47px;font-size:10.58px;color:#3b3b3b;">Schowek</span>
<span class="t" style="left:229.00px;top:206.75px;font-size:10.27px;color:#3b3b3b;">Czcionka</span>
<span class="t" style="left:359.60px;top:206.15px;font-size:10.92px;color:#3b3b3b;letter-spacing:0.017px;">Wyrównanie</span>
<span class="t" style="left:489.40px;top:206.79px;font-size:10.23px;color:#3b3b3b;letter-spacing:-0.300px;">Liczba</span>
<span class="t" style="left:645.10px;top:206.79px;font-size:10.23px;color:#3b3b3b;letter-spacing:-0.200px;">Style</span>
<span class="t" style="left:782.20px;top:206.49px;font-size:10.55px;color:#3b3b3b;">Komórki</span>
<span class="t" style="left:870.60px;top:206.26px;font-size:10.8px;color:#3b3b3b;">Edytowanie</span>
<span class="t" style="left:955.60px;top:206.25px;font-size:10.82px;color:#3b3b3b;">Poufność</span>
<span class="t" style="left:1021.70px;top:206.08px;font-size:11px;color:#3b3b3b;letter-spacing:0.117px;">Dodatki</span>
<svg class="r" style="left:169.5px;top:208px;" width="9" height="8" viewBox="0 0 9 8"><g fill="none" stroke="#424242" stroke-width="1"><path d="M0.5 7 V0.5 H7"/><path d="M3 3 L8 7.5 M8 4.5 V7.5 H5"/></g></svg>
<svg class="r" style="left:322.8px;top:208px;" width="9" height="8" viewBox="0 0 9 8"><g fill="none" stroke="#424242" stroke-width="1"><path d="M0.5 7 V0.5 H7"/><path d="M3 3 L8 7.5 M8 4.5 V7.5 H5"/></g></svg>
<svg class="r" style="left:448.8px;top:208px;" width="9" height="8" viewBox="0 0 9 8"><g fill="none" stroke="#424242" stroke-width="1"><path d="M0.5 7 V0.5 H7"/><path d="M3 3 L8 7.5 M8 4.5 V7.5 H5"/></g></svg>
<svg class="r" style="left:549.8px;top:208px;" width="9" height="8" viewBox="0 0 9 8"><g fill="none" stroke="#424242" stroke-width="1"><path d="M0.5 7 V0.5 H7"/><path d="M3 3 L8 7.5 M8 4.5 V7.5 H5"/></g></svg>
<svg class="r" style="left:102px;top:134px;" width="30" height="32" viewBox="0 0 30 32"><path d="M3 5.5 H8 V3.5 C8 1.5 14.5 1.5 14.5 3.5 V5.5 H20 C21 5.5 21.5 6 21.5 7 V27 C21.5 28 21 28.5 20 28.5 H3 C2 28.5 1.5 28 1.5 27 V7 C1.5 6 2 5.5 3 5.5Z" fill="#fcf3e4" stroke="#e3a640" stroke-width="1.6"/>
<path d="M8 5.5 V7.5 H14.5 V5.5" fill="#fff" stroke="#7a7a7a" stroke-width="1.2"/>
<rect x="14.8" y="13.5" width="12.5" height="16.2" fill="#fff" stroke="#3a3a3a" stroke-width="1.5"/></svg>
<span class="t" style="left:100.30px;top:168.83px;font-size:11.05px;color:#242424;">Wklej</span>
<svg class="r" style="left:109.5px;top:187.015px;" width="8.400000000000006" height="5.970000000000003" viewBox="0 0 8.400000000000006 5.970000000000003"><path d="M1.5 1.5 L4.20 4.47 L6.90 1.5" fill="none" stroke="#4a4a4a" stroke-width="1.05" stroke-linecap="round" stroke-linejoin="round"/></svg>
<svg class="r" style="left:140px;top:134px;" width="14" height="17" viewBox="0 0 14 17"><g fill="none" stroke-width="1.3"><path d="M4 1 L9 10 M10 1 L5 10" stroke="#444"/>
<circle cx="4" cy="12.8" r="2.3" stroke="#3d7fd0"/><circle cx="10" cy="12.8" r="2.3" stroke="#3d7fd0"/></g></svg>
<svg class="r" style="left:138px;top:158px;" width="19" height="18" viewBox="0 0 19 18"><g fill="none" stroke="#444" stroke-width="1.2"><path d="M6 3 V1.5 H2 C1.5 1.5 1.5 2 1.5 2.5 V12.5 C1.5 13 2 13.5 2.5 13.5 H5.5"/>
<path d="M6 4.5 H12 L16.5 9 V16 C16.5 16.5 16 17 15.5 17 H7 C6.5 17 6 16.5 6 16 V5 C6 4.7 6.3 4.5 6.5 4.5Z"/><path d="M12 4.5 V9 H16.5"/>
<line x1="8.5" y1="12" x2="13.5" y2="12"/><line x1="8.5" y1="14.5" x2="13.5" y2="14.5"/></g></svg>
<svg class="r" style="left:160.2px;top:164.305px;" width="8.800000000000011" height="6.190000000000007" viewBox="0 0 8.800000000000011 6.190000000000007"><path d="M1.5 1.5 L4.40 4.69 L7.30 1.5" fill="none" stroke="#4a4a4a" stroke-width="1.05" stroke-linecap="round" stroke-linejoin="round"/></svg>
<svg class="r" style="left:139px;top:182px;" width="18" height="17" viewBox="0 0 18 17"><path d="M9 8 L14.5 2.5 C15.2 1.8 16.3 2.2 16 3 L11 9.5" fill="#fff" stroke="#555" stroke-width="1.2"/>
<path d="M5 7 L11 12 L8 15.5 C7 16.5 4 16.5 1.5 15.5 C3 13.5 2.5 11 5 7Z" fill="#f3b24a" stroke="#e28a1a" stroke-width="1"/>
<path d="M6 6.5 L11.5 11" stroke="#d98a2a" stroke-width="1.8"/></svg>
<div class="r" style="left:189px;top:131px;width:95px;height:22.5px;border:1px solid #a9a9a9;box-sizing:border-box;border-radius:5px;background:#fff;"></div>
<span class="t" style="left:191.90px;top:135.07px;font-size:11.34px;color:#242424;">Aptos Narrow</span>
<svg class="r" style="left:274.1px;top:139.825px;" width="8.0" height="5.75" viewBox="0 0 8.0 5.75"><path d="M1.5 1.5 L4.00 4.25 L6.50 1.5" fill="none" stroke="#4a4a4a" stroke-width="1.05" stroke-linecap="round" stroke-linejoin="round"/></svg>
<div class="r" style="left:286px;top:131px;width:40.5px;height:22.5px;border:1px solid #a9a9a9;box-sizing:border-box;border-radius:5px;background:#fff;"></div>
<span class="t" style="left:289.80px;top:134.92px;font-size:11.5px;color:#242424;">11</span>
<svg class="r" style="left:316.5px;top:139.825px;" width="8" height="5.75" viewBox="0 0 8 5.75"><path d="M1.5 1.5 L4.00 4.25 L6.50 1.5" fill="none" stroke="#4a4a4a" stroke-width="1.05" stroke-linecap="round" stroke-linejoin="round"/></svg>
<span class="t" style="left:196.90px;top:158.50px;font-size:12.5px;color:#333;font-weight:bold;">B</span>
<svg class="r" style="left:220px;top:160px;" width="10" height="11" viewBox="0 0 10 11"><path d="M3.5 1 H9.5 M0.5 10 H6.5 M6.5 1 L3.5 10" fill="none" stroke="#444" stroke-width="1.2"/></svg>
<svg class="r" style="left:243px;top:159px;" width="11" height="15" viewBox="0 0 11 15"><g fill="none" stroke="#444" stroke-width="1.2"><path d="M2 1 V7 C2 10.5 8.5 10.5 8.5 7 V1"/><line x1="0.8" y1="13.3" x2="9.8" y2="13.3"/></g></svg>
<svg class="r" style="left:262.3px;top:163.96px;" width="8.599999999999966" height="6.079999999999981" viewBox="0 0 8.599999999999966 6.079999999999981"><path d="M1.5 1.5 L4.30 4.58 L7.10 1.5" fill="none" stroke="#4a4a4a" stroke-width="1.05" stroke-linecap="round" stroke-linejoin="round"/></svg>
<div class="r" style="left:277.5px;top:157px;width:1px;height:20px;background:#e3e3e3;"></div>
<svg class="r" style="left:283px;top:158px;" width="17" height="15" viewBox="0 0 17 15"><path d="M1 13.5 L5.5 1.5 H6.5 L11 13.5 M3 8.8 H9.5" fill="none" stroke="#444" stroke-width="1.3"/><path d="M12 4 L13.8 2 L15.6 4" fill="none" stroke="#444" stroke-width="1"/></svg>
<svg class="r" style="left:309px;top:159px;" width="15" height="14" viewBox="0 0 15 14"><path d="M1 12.5 L4.5 2.5 H5.5 L9 12.5 M2.5 8.5 H7.5" fill="none" stroke="#444" stroke-width="1.2"/><path d="M10.5 2 L12.2 4 L14 2" fill="none" stroke="#444" stroke-width="1"/></svg>
<svg class="r" style="left:191px;top:183px;" width="17" height="16" viewBox="0 0 17 16"><g stroke="#777" stroke-width="0.9" stroke-dasharray="1 1.2" fill="none"><rect x="1.5" y="1.5" width="13" height="12"/><line x1="8" y1="1.5" x2="8" y2="13.5"/><line x1="1.5" y1="7.5" x2="14.5" y2="7.5"/></g>
<line x1="1" y1="14" x2="15" y2="14" stroke="#222" stroke-width="1.3"/></svg>
<svg class="r" style="left:213.5px;top:188.5425px;" width="8.300000000000011" height="5.915000000000006" viewBox="0 0 8.300000000000011 5.915000000000006"><path d="M1.5 1.5 L4.15 4.42 L6.80 1.5" fill="none" stroke="#4a4a4a" stroke-width="1.05" stroke-linecap="round" stroke-linejoin="round"/></svg>
<div class="r" style="left:228px;top:180px;width:1px;height:23px;background:#e3e3e3;"></div>
<svg class="r" style="left:233px;top:182px;" width="18" height="19" viewBox="0 0 18 19"><path d="M3.5 8 L8 3.5 L13 8.5 L9 12.5 C8.5 13 7.5 13 7 12.5 L3.5 9 C3.2 8.7 3.2 8.3 3.5 8Z" fill="#fff" stroke="#555" stroke-width="1.2"/>
<path d="M6 1 L8 3.5" stroke="#555" stroke-width="1.2"/><path d="M13.5 7.5 C14.5 6 15.5 7 15 9" fill="none" stroke="#3a78c8" stroke-width="1.3"/>
<rect x="1" y="13" width="16" height="5" fill="#f4e800"/></svg>
<svg class="r" style="left:255.0px;top:188.51500000000001px;" width="8.399999999999977" height="5.969999999999988" viewBox="0 0 8.399999999999977 5.969999999999988"><path d="M1.5 1.5 L4.20 4.47 L6.90 1.5" fill="none" stroke="#4a4a4a" stroke-width="1.05" stroke-linecap="round" stroke-linejoin="round"/></svg>
<svg class="r" style="left:272px;top:182px;" width="17" height="18" viewBox="0 0 17 18"><path d="M4 11 L8 1.5 H9 L13 11 M5.5 7.5 H11.5" fill="none" stroke="#444" stroke-width="1.3"/><rect x="0.8" y="12.8" width="15.4" height="3.8" fill="#d31c1c"/></svg>
<svg class="r" style="left:293.8px;top:188.5425px;" width="8.300000000000011" height="5.915000000000006" viewBox="0 0 8.300000000000011 5.915000000000006"><path d="M1.5 1.5 L4.15 4.42 L6.80 1.5" fill="none" stroke="#4a4a4a" stroke-width="1.05" stroke-linecap="round" stroke-linejoin="round"/></svg>
<div class="r" style="left:347px;top:135px;width:13px;height:1px;background:#3f3f3f;"></div>
<div class="r" style="left:349px;top:139px;width:9px;height:1px;background:#3f3f3f;"></div>
<div class="r" style="left:346px;top:143px;width:14px;height:1px;background:#3f3f3f;"></div>
<div class="r" style="left:371px;top:138px;width:13px;height:1px;background:#3f3f3f;"></div>
<div class="r" style="left:372px;top:141px;width:11px;height:1px;background:#3f3f3f;"></div>
<div class="r" style="left:371px;top:145px;width:13px;height:1px;background:#3f3f3f;"></div>
<div class="r" style="left:391px;top:131.4px;width:22.5px;height:22px;background:#ebebeb;border:1px solid #767676;box-sizing:border-box;border-radius:4px;"></div>
<div class="r" style="left:396px;top:141px;width:13px;height:1px;background:#3f3f3f;"></div>
<div class="r" style="left:397px;top:145px;width:10px;height:1px;background:#3f3f3f;"></div>
<div class="r" style="left:396px;top:149px;width:13px;height:1px;background:#3f3f3f;"></div>
<svg class="r" style="left:420px;top:135px;" width="17" height="16" viewBox="0 0 17 16"><text x="1" y="7" font-family="Liberation Sans" font-size="8.5" fill="#444">ab</text><text x="1" y="14.5" font-family="Liberation Sans" font-size="8.5" fill="#444">c</text>
<path d="M14.5 7.5 C14.5 11 13 11.5 7.5 11.5 M10 9 L7.5 11.5 L10 14" fill="none" stroke="#2f86d0" stroke-width="1.2"/></svg>
<div class="r" style="left:346px;top:160px;width:14px;height:1px;background:#3f3f3f;"></div>
<div class="r" style="left:346px;top:164px;width:10px;height:1px;background:#3f3f3f;"></div>
<div class="r" style="left:346px;top:168px;width:14px;height:1px;background:#3f3f3f;"></div>
<div class="r" style="left:346px;top:172px;width:10px;height:1px;background:#3f3f3f;"></div>
<div class="r" style="left:371px;top:160px;width:13px;height:1px;background:#3f3f3f;"></div>
<div class="r" style="left:373px;top:164px;width:9px;height:1px;background:#3f3f3f;"></div>
<div class="r" style="left:371px;top:168px;width:13px;height:1px;background:#3f3f3f;"></div>
<div class="r" style="left:373px;top:172px;width:9px;height:1px;background:#3f3f3f;"></div>
<div class="r" style="left:396px;top:160px;width:13px;height:1px;background:#3f3f3f;"></div>
<div class="r" style="left:400px;top:164px;width:9px;height:1px;background:#3f3f3f;"></div>
<div class="r" style="left:396px;top:168px;width:13px;height:1px;background:#3f3f3f;"></div>
<div class="r" style="left:400px;top:172px;width:9px;height:1px;background:#3f3f3f;"></div>
<svg class="r" style="left:418px;top:158px;" width="17" height="17" viewBox="0 0 17 17"><g fill="none" stroke="#b8b8b8" stroke-width="1.1"><rect x="1.5" y="1.5" width="13.5" height="14"/><line x1="1.5" y1="4.5" x2="15" y2="4.5"/><line x1="1.5" y1="12.5" x2="15" y2="12.5"/>
<line x1="8.2" y1="1.5" x2="8.2" y2="4.5"/><line x1="8.2" y1="12.5" x2="8.2" y2="15.5"/><path d="M4 8.5 H12.5 M5.5 7 L4 8.5 L5.5 10 M11 7 L12.5 8.5 L11 10"/></g></svg>
<svg class="r" style="left:439.5px;top:163.85px;" width="9" height="6.300000000000001" viewBox="0 0 9 6.300000000000001"><path d="M1.5 1.5 L4.50 4.80 L7.50 1.5" fill="none" stroke="#c0c0c0" stroke-width="1.05" stroke-linecap="round" stroke-linejoin="round"/></svg>
<svg class="r" style="left:345px;top:183px;" width="16" height="16" viewBox="0 0 16 16"><g stroke="#444" stroke-width="1"><line x1="1" y1="2.5" x2="15" y2="2.5"/><line x1="8" y1="6.5" x2="15" y2="6.5"/><line x1="8" y1="10.5" x2="15" y2="10.5"/><line x1="1" y1="14.5" x2="15" y2="14.5"/></g>
<path d="M7 8 H1.5 M3.8 5.8 L1.5 8 L3.8 10.2" fill="none" stroke="#2b8fb8" stroke-width="1.3"/></svg>
<svg class="r" style="left:370px;top:183px;" width="16" height="16" viewBox="0 0 16 16"><g stroke="#444" stroke-width="1"><line x1="1" y1="2.5" x2="15" y2="2.5"/><line x1="8" y1="6.5" x2="15" y2="6.5"/><line x1="8" y1="10.5" x2="15" y2="10.5"/><line x1="1" y1="14.5" x2="15" y2="14.5"/></g>
<path d="M1 8 H6.5 M4.2 5.8 L6.5 8 L4.2 10.2" fill="none" stroke="#2b8fb8" stroke-width="1.3"/></svg>
<div class="r" style="left:391px;top:180px;width:1px;height:25px;background:#e3e3e3;"></div>
<svg class="r" style="left:396px;top:182px;" width="19" height="17" viewBox="0 0 19 17"><text x="0" y="0" font-family="Liberation Sans" font-size="8.5" fill="#444" transform="translate(3,4) rotate(50)">ab</text>
<path d="M5 16 L16 5 M12 5 H16 V9" fill="none" stroke="#2b8fb8" stroke-width="1.2"/></svg>
<svg class="r" style="left:416.2px;top:189.0425px;" width="8.300000000000011" height="5.915000000000006" viewBox="0 0 8.300000000000011 5.915000000000006"><path d="M1.5 1.5 L4.15 4.42 L6.80 1.5" fill="none" stroke="#4a4a4a" stroke-width="1.05" stroke-linecap="round" stroke-linejoin="round"/></svg>
<div class="r" style="left:468.4px;top:131.4px;width:85px;height:22px;border:1px solid #a9a9a9;box-sizing:border-box;border-radius:5px;background:#fff;"></div>
<span class="t" style="left:471.40px;top:136.06px;font-size:10.8px;color:#242424;">Księgowe</span>
<svg class="r" style="left:543.9px;top:139.8975px;" width="8.100000000000023" height="5.805000000000012" viewBox="0 0 8.100000000000023 5.805000000000012"><path d="M1.5 1.5 L4.05 4.31 L6.60 1.5" fill="none" stroke="#4a4a4a" stroke-width="1.05" stroke-linecap="round" stroke-linejoin="round"/></svg>
<svg class="r" style="left:471px;top:161px;" width="18" height="15" viewBox="0 0 18 15"><rect x="1" y="1.5" width="14" height="9.5" fill="#fff" stroke="#444" stroke-width="1.2"/>
<text x="2.5" y="9.3" font-family="Liberation Sans" font-size="7" fill="#444">CC</text>
<ellipse cx="13" cy="8.5" rx="3.6" ry="1.6" fill="#fff" stroke="#e0701a" stroke-width="1.1"/>
<path d="M9.4 8.5 V13 C9.4 14 16.6 14 16.6 13 V8.5" fill="#f8c78a" stroke="#e0701a" stroke-width="1.1"/></svg>
<svg class="r" style="left:493.3px;top:164.48000000000002px;" width="7.800000000000011" height="5.640000000000006" viewBox="0 0 7.800000000000011 5.640000000000006"><path d="M1.5 1.5 L3.90 4.14 L6.30 1.5" fill="none" stroke="#4a4a4a" stroke-width="1.05" stroke-linecap="round" stroke-linejoin="round"/></svg>
<span class="t" style="left:511.60px;top:156.72px;font-size:19px;color:#444;-webkit-text-stroke:0;font-weight:normal;">%</span>
<span class="t" style="left:535.00px;top:161.81px;font-size:8.58px;color:#8a8a8a;letter-spacing:-0.025px;">000</span>
<svg class="r" style="left:471px;top:183px;" width="18" height="17" viewBox="0 0 18 17"><path d="M8 5 H2 M4.5 2.5 L2 5 L4.5 7.5" fill="none" stroke="#2f7fc8" stroke-width="1.3"/>
<text x="9" y="8" font-family="Liberation Sans" font-size="8.5" fill="#444">0</text><text x="4" y="15.5" font-family="Liberation Sans" font-size="8.5" fill="#444">,00</text></svg>
<svg class="r" style="left:495px;top:183px;" width="18" height="17" viewBox="0 0 18 17"><path d="M1 12 H8 M5.5 9.5 L8 12 L5.5 14.5" fill="none" stroke="#2f7fc8" stroke-width="1.3"/>
<text x="4" y="8" font-family="Liberation Sans" font-size="8.5" fill="#444">,00</text><text x="8.5" y="15.5" font-family="Liberation Sans" font-size="8.5" fill="#444">,0</text></svg>
<svg class="r" style="left:572px;top:135px;" width="17" height="15" viewBox="0 0 17 15"><rect x="1" y="1" width="14.5" height="12.5" fill="#fff" stroke="#444" stroke-width="1.1"/>
<rect x="4.5" y="4" width="10.5" height="9" fill="#ef6a6a"/><rect x="4.5" y="4" width="3.8" height="3.5" fill="#3d7fd0"/>
<g stroke="#444" stroke-width="0.9"><line x1="1" y1="4" x2="15.5" y2="4"/><line x1="1" y1="7.5" x2="15.5" y2="7.5"/><line x1="1" y1="10.5" x2="15.5" y2="10.5"/><line x1="4.5" y1="1" x2="4.5" y2="13.5"/><line x1="8.3" y1="1" x2="8.3" y2="13.5"/><line x1="12" y1="1" x2="12" y2="13.5"/></g></svg>
<span class="t" style="left:592.40px;top:136.93px;font-size:11.27px;color:#242424;letter-spacing:0.014px;">Formatowanie warunkowe</span>
<svg class="r" style="left:726.7px;top:140.79000000000002px;" width="7.399999999999977" height="5.4199999999999875" viewBox="0 0 7.399999999999977 5.4199999999999875"><path d="M1.5 1.5 L3.70 3.92 L5.90 1.5" fill="none" stroke="#4a4a4a" stroke-width="1.05" stroke-linecap="round" stroke-linejoin="round"/></svg>
<svg class="r" style="left:572px;top:159px;" width="17" height="15" viewBox="0 0 17 15"><g fill="none" stroke="#444" stroke-width="1"><rect x="1" y="1" width="14.5" height="12.5"/><line x1="1" y1="4.5" x2="15.5" y2="4.5"/><line x1="1" y1="8.5" x2="8" y2="8.5"/><line x1="5" y1="1" x2="5" y2="13.5"/><line x1="10" y1="1" x2="10" y2="6"/></g>
<path d="M6 13.5 L14 5.5 L16 7.5 L9 13.5 Z" fill="#4a9ad8"/><path d="M5 13.5 L13 13.5 L15.5 11" fill="none" stroke="#2a70b8" stroke-width="1"/></svg>
<span class="t" style="left:592.40px;top:161.51px;font-size:11.19px;color:#242424;">Formatuj jako tabelę</span>
<svg class="r" style="left:695.8px;top:165.15249999999997px;" width="7.900000000000091" height="5.69500000000005" viewBox="0 0 7.900000000000091 5.69500000000005"><path d="M1.5 1.5 L3.95 4.20 L6.40 1.5" fill="none" stroke="#4a4a4a" stroke-width="1.05" stroke-linecap="round" stroke-linejoin="round"/></svg>
<svg class="r" style="left:572px;top:184px;" width="17" height="15" viewBox="0 0 17 15"><g fill="none" stroke="#444" stroke-width="1"><rect x="1" y="1" width="14.5" height="12.5"/><line x1="1" y1="4" x2="15.5" y2="4"/><line x1="4" y1="1" x2="4" y2="13.5"/></g>
<path d="M4 13.5 L15.5 2 V13.5 Z" fill="#5aa6e0"/><path d="M6 13.5 L15 4.5" stroke="#2a70b8" stroke-width="1.2"/></svg>
<span class="t" style="left:592.40px;top:185.83px;font-size:11.27px;color:#242424;">Style komórki</span>
<svg class="r" style="left:662.1px;top:189.1525px;" width="7.899999999999977" height="5.694999999999988" viewBox="0 0 7.899999999999977 5.694999999999988"><path d="M1.5 1.5 L3.95 4.19 L6.40 1.5" fill="none" stroke="#4a4a4a" stroke-width="1.05" stroke-linecap="round" stroke-linejoin="round"/></svg>
<svg class="r" style="left:761px;top:135px;" width="17" height="15" viewBox="0 0 17 15"><rect x="1.5" y="1.5" width="14" height="12" fill="#fff" stroke="#3a3a3a" stroke-width="1"/>
<rect x="6" y="1" width="10" height="12.5" fill="#8cc8f0"/><path d="M4.5 7 H1.5 M3 5.5 L1.5 7 L3 8.5" stroke="#2a70b8" stroke-width="1" fill="none"/>
<g stroke="#6a6a6a" stroke-width="0.7"><line x1="1.5" y1="5.5" x2="15.5" y2="5.5"/><line x1="1.5" y1="9.5" x2="15.5" y2="9.5"/><line x1="6.2" y1="1.5" x2="6.2" y2="13.5"/><line x1="10.8" y1="1.5" x2="10.8" y2="13.5"/></g></svg>
<span class="t" style="left:781.00px;top:136.51px;font-size:10.97px;color:#242424;letter-spacing:-0.150px;">Wstaw</span>
<svg class="r" style="left:824.5px;top:140.20749999999998px;" width="7.7000000000000455" height="5.585000000000026" viewBox="0 0 7.7000000000000455 5.585000000000026"><path d="M1.5 1.5 L3.85 4.09 L6.20 1.5" fill="none" stroke="#4a4a4a" stroke-width="1.05" stroke-linecap="round" stroke-linejoin="round"/></svg>
<svg class="r" style="left:761px;top:159px;" width="17" height="15" viewBox="0 0 17 15"><rect x="1.5" y="1.5" width="14" height="12" fill="#fff" stroke="#3a3a3a" stroke-width="1"/>
<rect x="1" y="5" width="10" height="4.3" fill="#8cc8f0"/><path d="M12 5.5 L15.5 9 M15.5 5.5 L12 9" stroke="#e04a2a" stroke-width="1.2"/>
<g stroke="#6a6a6a" stroke-width="0.7"><line x1="1.5" y1="5.5" x2="15.5" y2="5.5"/><line x1="1.5" y1="9.5" x2="15.5" y2="9.5"/><line x1="6.2" y1="1.5" x2="6.2" y2="13.5"/><line x1="10.8" y1="1.5" x2="10.8" y2="13.5"/></g></svg>
<span class="t" style="left:781.00px;top:161.31px;font-size:10.97px;color:#242424;letter-spacing:-0.417px;">Usuń</span>
<svg class="r" style="left:816.5px;top:164.325px;" width="8" height="5.75" viewBox="0 0 8 5.75"><path d="M1.5 1.5 L4.00 4.25 L6.50 1.5" fill="none" stroke="#4a4a4a" stroke-width="1.05" stroke-linecap="round" stroke-linejoin="round"/></svg>
<svg class="r" style="left:761px;top:184px;" width="17" height="15" viewBox="0 0 17 15"><rect x="1.5" y="1.5" width="14" height="12" fill="#fff" stroke="#3a3a3a" stroke-width="1"/>
<rect x="1" y="5" width="15" height="4.3" fill="#8cc8f0"/><line x1="3" y1="0" x2="14" y2="0" stroke="#2a70b8" stroke-width="1"/>
<g stroke="#6a6a6a" stroke-width="0.7"><line x1="1.5" y1="5.5" x2="15.5" y2="5.5"/><line x1="1.5" y1="9.5" x2="15.5" y2="9.5"/><line x1="6.2" y1="1.5" x2="6.2" y2="13.5"/><line x1="10.8" y1="1.5" x2="10.8" y2="13.5"/></g></svg>
<span class="t" style="left:781.00px;top:185.37px;font-size:11.23px;color:#242424;letter-spacing:-0.014px;">Formatuj</span>
<svg class="r" style="left:828.5px;top:189.31750000000002px;" width="7.2999999999999545" height="5.364999999999975" viewBox="0 0 7.2999999999999545 5.364999999999975"><path d="M1.5 1.5 L3.65 3.86 L5.80 1.5" fill="none" stroke="#4a4a4a" stroke-width="1.05" stroke-linecap="round" stroke-linejoin="round"/></svg>
<svg class="r" style="left:864px;top:135px;" width="15" height="15" viewBox="0 0 15 15"><path d="M13 2.5 V1 H1.5 L7.5 7.5 L1.5 14 H13 V12.5" fill="none" stroke="#444" stroke-width="1.2" stroke-linejoin="miter"/></svg>
<svg class="r" style="left:885.0px;top:139.5075px;" width="7.7000000000000455" height="5.585000000000026" viewBox="0 0 7.7000000000000455 5.585000000000026"><path d="M1.5 1.5 L3.85 4.09 L6.20 1.5" fill="none" stroke="#4a4a4a" stroke-width="1.05" stroke-linecap="round" stroke-linejoin="round"/></svg>
<svg class="r" style="left:902px;top:134px;" width="18" height="17" viewBox="0 0 18 17"><text x="0.5" y="7.8" font-family="Liberation Sans" font-size="8.5" fill="#2f7fc8">A</text>
<text x="0.5" y="15.8" font-family="Liberation Sans" font-size="8.5" fill="#444">Z</text>
<path d="M7.5 5 H16.5 L13 9.5 V13.5 L11 12.5 V9.5 Z" fill="none" stroke="#444" stroke-width="1.1" stroke-linejoin="round"/></svg>
<svg class="r" style="left:922.9px;top:139.425px;" width="8.0" height="5.75" viewBox="0 0 8.0 5.75"><path d="M1.5 1.5 L4.00 4.25 L6.50 1.5" fill="none" stroke="#4a4a4a" stroke-width="1.05" stroke-linecap="round" stroke-linejoin="round"/></svg>
<svg class="r" style="left:863px;top:159px;" width="17" height="16" viewBox="0 0 17 16"><rect x="1.5" y="1.5" width="13.5" height="12.5" fill="#fff" stroke="#444" stroke-width="1.2"/><line x1="1.5" y1="4" x2="15" y2="4" stroke="#444" stroke-width="1"/>
<path d="M8.2 6 V11.5 M6 9.5 L8.2 11.7 L10.4 9.5" fill="none" stroke="#2f7fc8" stroke-width="1.2"/></svg>
<svg class="r" style="left:882.8px;top:164.0425px;" width="8.300000000000068" height="5.915000000000038" viewBox="0 0 8.300000000000068 5.915000000000038"><path d="M1.5 1.5 L4.15 4.42 L6.80 1.5" fill="none" stroke="#4a4a4a" stroke-width="1.05" stroke-linecap="round" stroke-linejoin="round"/></svg>
<svg class="r" style="left:903px;top:158px;" width="17" height="17" viewBox="0 0 17 17"><g fill="none" stroke="#444" stroke-width="1.3"><circle cx="10.5" cy="6.5" r="5"/><line x1="7" y1="10" x2="1.5" y2="15.5"/></g></svg>
<svg class="r" style="left:922.9px;top:164.325px;" width="8.0" height="5.75" viewBox="0 0 8.0 5.75"><path d="M1.5 1.5 L4.00 4.25 L6.50 1.5" fill="none" stroke="#4a4a4a" stroke-width="1.05" stroke-linecap="round" stroke-linejoin="round"/></svg>
<svg class="r" style="left:863px;top:183px;" width="17" height="17" viewBox="0 0 17 17"><path d="M2 10.5 L9.5 3 C10.3 2.2 11.2 2.2 12 3 L15 6 C15.8 6.8 15.8 7.7 15 8.5 L7.5 16 L2 10.5Z" fill="#f2dcf5" stroke="#b05cc0" stroke-width="1.1"/>
<path d="M2 10.5 L5 7.5 L10.5 13 L7.5 16Z" fill="#c46ad2"/></svg>
<svg class="r" style="left:882.8px;top:189.0425px;" width="8.300000000000068" height="5.915000000000038" viewBox="0 0 8.300000000000068 5.915000000000038"><path d="M1.5 1.5 L4.15 4.42 L6.80 1.5" fill="none" stroke="#4a4a4a" stroke-width="1.05" stroke-linecap="round" stroke-linejoin="round"/></svg>
<svg class="r" style="left:965px;top:133px;" width="30" height="30" viewBox="0 0 30 30"><path d="M3 6 H14 L20 12 V28 H3 Z" fill="#f0f0f0" stroke="#d0d0d0" stroke-width="1.2"/>
<g transform="rotate(45 17 10)"><rect x="12" y="1" width="10" height="14" rx="3" fill="#f4f4f4" stroke="#cfcfcf" stroke-width="1.2"/><line x1="15" y1="3" x2="15" y2="13" stroke="#d0d0d0"/><line x1="19" y1="3" x2="19" y2="13" stroke="#d0d0d0"/></g>
<path d="M6 14 L14 22" stroke="#c8c8c8" stroke-width="2.5" stroke-linecap="round"/></svg>
<span class="t" style="left:955.00px;top:167.56px;font-size:11.13px;color:#c2c2c2;letter-spacing:-0.014px;">Poufność</span>
<svg class="r" style="left:973.3px;top:186.20749999999998px;" width="7.7000000000000455" height="5.585000000000026" viewBox="0 0 7.7000000000000455 5.585000000000026"><path d="M1.5 1.5 L3.85 4.09 L6.20 1.5" fill="none" stroke="#c8c8c8" stroke-width="1.05" stroke-linecap="round" stroke-linejoin="round"/></svg>
<svg class="r" style="left:1027px;top:135px;" width="29" height="29" viewBox="0 0 29 29"><rect x="1.5" y="1.5" width="25.5" height="25.5" fill="#fff3ea" stroke="#e0672a" stroke-width="1.4"/>
<g fill="#fff" stroke="#e0672a" stroke-width="1.4"><rect x="4.5" y="4.5" width="8.5" height="8.5"/><rect x="15.5" y="4.5" width="8.5" height="8.5"/><rect x="4.5" y="15.5" width="8.5" height="8.5"/><rect x="15.5" y="15.5" width="8.5" height="8.5"/></g></svg>
<span class="t" style="left:1021.70px;top:167.79px;font-size:11.21px;color:#242424;">Dodatki</span>
<svg class="r" style="left:1082px;top:134px;" width="34" height="30" viewBox="0 0 34 30"><g stroke="#2e7d57" stroke-width="1.15" stroke-linejoin="round">
<path d="M20 2.2 C23 2.2 25.5 4 26.3 7.5 H17 L18.3 4 C18.8 2.8 19.4 2.2 20 2.2 Z" fill="#5cb58a"/>
<path d="M8 21 H17.5 L15.7 28 H12.5 C10 28 8.5 25 8 21 Z" fill="#5cb58a"/>
<path d="M17 7.5 H29 C31.5 7.5 32.3 9 31.8 11.5 L28.3 25 C27.8 27 26.5 28 24.5 28 H15.7 L20.6 7.5 Z" fill="#f0f9f4"/>
<path d="M6.5 2.2 H20 C22 2.2 22.8 3.5 22.3 5.5 L18 21 H5 C2.5 21 1.6 19.8 2 17.5 L3.6 6 C4 3.5 4.8 2.2 6.5 2.2 Z" fill="#f0f9f4"/>
<path d="M17 7.5 H20.6 L15.7 28 H12.5 L17 7.5 Z" fill="#f0f9f4"/>
</g></svg>
<span class="t" style="left:1080.30px;top:167.37px;font-size:11.66px;color:#242424;">Copilot</span>
<svg class="r" style="left:1181.9px;top:204.835px;" width="11.599999999999909" height="7.729999999999951" viewBox="0 0 11.599999999999909 7.729999999999951"><path d="M1.5 1.5 L5.80 6.23 L10.10 1.5" fill="none" stroke="#444" stroke-width="1.4" stroke-linecap="round" stroke-linejoin="round"/></svg>
<div class="r" style="left:84px;top:230px;width:94px;height:23px;background:#fff;border-radius:5px;box-shadow:0 0 0 1px #e6e6e6;"></div>
<span class="t" style="left:90.00px;top:234.88px;font-size:12.3px;color:#242424;letter-spacing:0.300px;">D2</span>
<svg class="r" style="left:163.0px;top:237.9375px;" width="10.5" height="7.125" viewBox="0 0 10.5 7.125"><path d="M1.5 1.5 L5.25 5.62 L9.00 1.5" fill="none" stroke="#444" stroke-width="1.3" stroke-linecap="round" stroke-linejoin="round"/></svg>
<svg class="r" style="left:186px;top:236px;" width="5" height="11" viewBox="0 0 5 11"><g fill="#333"><rect x="1" y="0.5" width="2.2" height="2.2"/><rect x="1" y="4.3" width="2.2" height="2.2"/><rect x="1" y="8.1" width="2.2" height="2.2"/></g></svg>
<div class="r" style="left:199px;top:230px;width:68px;height:23px;background:#fff;border-radius:5px;box-shadow:0 0 0 1px #e6e6e6;"></div>
<svg class="r" style="left:204px;top:235px;" width="13" height="13" viewBox="0 0 13 13"><path d="M1 1 L12 12 M12 1 L1 12" stroke="#c4c4c4" stroke-width="1.2"/></svg>
<svg class="r" style="left:225px;top:235px;" width="17" height="13" viewBox="0 0 17 13"><path d="M1 6.5 L5.5 11 L15.5 1" fill="none" stroke="#c4c4c4" stroke-width="1.2"/></svg>
<span class="t" style="left:248px;top:230px;font-family:'Liberation Serif';font-style:italic;font-size:17px;color:#333;letter-spacing:-0.5px">fx</span>
<div class="r" style="left:272.5px;top:230px;width:928.5px;height:23px;background:#fff;border-radius:5px;box-shadow:0 0 0 1px #e6e6e6;"></div>
<svg class="r" style="left:1185.5px;top:237.025px;" width="12" height="7.95" viewBox="0 0 12 7.95"><path d="M1.5 1.5 L6.00 6.45 L10.50 1.5" fill="none" stroke="#444" stroke-width="1.3" stroke-linecap="round" stroke-linejoin="round"/></svg>
<div class="r" style="left:76px;top:281px;width:1113px;height:409.5px;background:#fff;"></div>
<div class="r" style="left:76px;top:260px;width:1113px;height:21px;background:#f3f3f3;"></div>
<div class="r" style="left:76px;top:281px;width:31px;height:409.5px;background:#f3f3f3;"></div>
<div class="r" style="left:398px;top:260px;width:117px;height:21px;background:#d9d9d9;"></div>
<div class="r" style="left:76px;top:303px;width:30.5px;height:22px;background:#d9d9d9;"></div>
<svg class="r" style="left:88px;top:265px;" width="16" height="15" viewBox="0 0 16 15"><path d="M14.5 1 V14 H1.5 Z" fill="#b9b9b9"/></svg>
<div class="r" style="left:177px;top:281px;width:1px;height:409.5px;background:#e3e3e3;"></div>
<div class="r" style="left:280px;top:281px;width:1px;height:409.5px;background:#e3e3e3;"></div>
<div class="r" style="left:398px;top:281px;width:1px;height:409.5px;background:#e3e3e3;"></div>
<div class="r" style="left:515px;top:281px;width:1px;height:409.5px;background:#e3e3e3;"></div>
<div class="r" style="left:584px;top:281px;width:1px;height:409.5px;background:#e3e3e3;"></div>
<div class="r" style="left:654px;top:281px;width:1px;height:409.5px;background:#e3e3e3;"></div>
<div class="r" style="left:724px;top:281px;width:1px;height:409.5px;background:#e3e3e3;"></div>
<div class="r" style="left:794px;top:281px;width:1px;height:409.5px;background:#e3e3e3;"></div>
<div class="r" style="left:864px;top:281px;width:1px;height:409.5px;background:#e3e3e3;"></div>
<div class="r" style="left:934px;top:281px;width:1px;height:409.5px;background:#e3e3e3;"></div>
<div class="r" style="left:1004px;top:281px;width:1px;height:409.5px;background:#e3e3e3;"></div>
<div class="r" style="left:1074px;top:281px;width:1px;height:409.5px;background:#e3e3e3;"></div>
<div class="r" style="left:1144px;top:281px;width:1px;height:409.5px;background:#e3e3e3;"></div>
<div class="r" style="left:107px;top:303px;width:1082px;height:1px;background:#e3e3e3;"></div>
<div class="r" style="left:107px;top:325px;width:1082px;height:1px;background:#e3e3e3;"></div>
<div class="r" style="left:107px;top:346px;width:1082px;height:1px;background:#e3e3e3;"></div>
<div class="r" style="left:107px;top:368px;width:1082px;height:1px;background:#e3e3e3;"></div>
<div class="r" style="left:107px;top:390px;width:1082px;height:1px;background:#e3e3e3;"></div>
<div class="r" style="left:107px;top:412px;width:1082px;height:1px;background:#e3e3e3;"></div>
<div class="r" style="left:107px;top:433px;width:1082px;height:1px;background:#e3e3e3;"></div>
<div class="r" style="left:107px;top:455px;width:1082px;height:1px;background:#e3e3e3;"></div>
<div class="r" style="left:107px;top:477px;width:1082px;height:1px;background:#e3e3e3;"></div>
<div class="r" style="left:107px;top:498px;width:1082px;height:1px;background:#e3e3e3;"></div>
<div class="r" style="left:107px;top:520px;width:1082px;height:1px;background:#e3e3e3;"></div>
<div class="r" style="left:107px;top:542px;width:1082px;height:1px;background:#e3e3e3;"></div>
<div class="r" style="left:107px;top:563px;width:1082px;height:1px;background:#e3e3e3;"></div>
<div class="r" style="left:107px;top:585px;width:1082px;height:1px;background:#e3e3e3;"></div>
<div class="r" style="left:107px;top:607px;width:1082px;height:1px;background:#e3e3e3;"></div>
<div class="r" style="left:107px;top:628px;width:1082px;height:1px;background:#e3e3e3;"></div>
<div class="r" style="left:107px;top:650px;width:1082px;height:1px;background:#e3e3e3;"></div>
<div class="r" style="left:107px;top:672px;width:1082px;height:1px;background:#e3e3e3;"></div>
<div class="r" style="left:107px;top:694px;width:1082px;height:1px;background:#e3e3e3;"></div>
<div class="r" style="left:177px;top:262px;width:1px;height:19px;background:#d4d4d4;"></div>
<div class="r" style="left:280px;top:262px;width:1px;height:19px;background:#d4d4d4;"></div>
<div class="r" style="left:398px;top:262px;width:1px;height:19px;background:#d4d4d4;"></div>
<div class="r" style="left:515px;top:262px;width:1px;height:19px;background:#d4d4d4;"></div>
<div class="r" style="left:584px;top:262px;width:1px;height:19px;background:#d4d4d4;"></div>
<div class="r" style="left:654px;top:262px;width:1px;height:19px;background:#d4d4d4;"></div>
<div class="r" style="left:724px;top:262px;width:1px;height:19px;background:#d4d4d4;"></div>
<div class="r" style="left:794px;top:262px;width:1px;height:19px;background:#d4d4d4;"></div>
<div class="r" style="left:864px;top:262px;width:1px;height:19px;background:#d4d4d4;"></div>
<div class="r" style="left:934px;top:262px;width:1px;height:19px;background:#d4d4d4;"></div>
<div class="r" style="left:1004px;top:262px;width:1px;height:19px;background:#d4d4d4;"></div>
<div class="r" style="left:1074px;top:262px;width:1px;height:19px;background:#d4d4d4;"></div>
<div class="r" style="left:1144px;top:262px;width:1px;height:19px;background:#d4d4d4;"></div>
<div class="r" style="left:76px;top:303px;width:30.5px;height:1px;background:#d4d4d4;"></div>
<div class="r" style="left:76px;top:325px;width:30.5px;height:1px;background:#d4d4d4;"></div>
<div class="r" style="left:76px;top:346px;width:30.5px;height:1px;background:#d4d4d4;"></div>
<div class="r" style="left:76px;top:368px;width:30.5px;height:1px;background:#d4d4d4;"></div>
<div class="r" style="left:76px;top:390px;width:30.5px;height:1px;background:#d4d4d4;"></div>
<div class="r" style="left:76px;top:412px;width:30.5px;height:1px;background:#d4d4d4;"></div>
<div class="r" style="left:76px;top:433px;width:30.5px;height:1px;background:#d4d4d4;"></div>
<div class="r" style="left:76px;top:455px;width:30.5px;height:1px;background:#d4d4d4;"></div>
<div class="r" style="left:76px;top:477px;width:30.5px;height:1px;background:#d4d4d4;"></div>
<div class="r" style="left:76px;top:498px;width:30.5px;height:1px;background:#d4d4d4;"></div>
<div class="r" style="left:76px;top:520px;width:30.5px;height:1px;background:#d4d4d4;"></div>
<div class="r" style="left:76px;top:542px;width:30.5px;height:1px;background:#d4d4d4;"></div>
<div class="r" style="left:76px;top:563px;width:30.5px;height:1px;background:#d4d4d4;"></div>
<div class="r" style="left:76px;top:585px;width:30.5px;height:1px;background:#d4d4d4;"></div>
<div class="r" style="left:76px;top:607px;width:30.5px;height:1px;background:#d4d4d4;"></div>
<div class="r" style="left:76px;top:628px;width:30.5px;height:1px;background:#d4d4d4;"></div>
<div class="r" style="left:76px;top:650px;width:30.5px;height:1px;background:#d4d4d4;"></div>
<div class="r" style="left:76px;top:672px;width:30.5px;height:1px;background:#d4d4d4;"></div>
<div class="r" style="left:76px;top:694px;width:30.5px;height:1px;background:#d4d4d4;"></div>
<div class="r" style="left:106px;top:262px;width:1px;height:428.5px;background:#c9c9c9;"></div>
<div class="r" style="left:76px;top:281px;width:1113px;height:1px;background:#a8a8a8;"></div>
<div class="r" style="left:107px;top:282px;width:408px;height:21px;background:#156487;"></div>
<div class="r" style="left:107px;top:303px;width:408px;height:22px;background:#bee5f4;"></div>
<div class="r" style="left:107px;top:346px;width:408px;height:22px;background:#bee5f4;"></div>
<div class="r" style="left:107px;top:390px;width:408px;height:22px;background:#bee5f4;"></div>
<div class="r" style="left:107px;top:433px;width:408px;height:22px;background:#bee5f4;"></div>
<div class="r" style="left:107px;top:477px;width:408px;height:21px;background:#bee5f4;"></div>
<div class="r" style="left:107px;top:520px;width:408px;height:22px;background:#bee5f4;"></div>
<div class="r" style="left:107px;top:563px;width:408px;height:22px;background:#bee5f4;"></div>
<div class="r" style="left:107px;top:607px;width:408px;height:21px;background:#bee5f4;"></div>
<div class="r" style="left:107px;top:325px;width:409px;height:1px;background:#8cbfd6;"></div>
<div class="r" style="left:107px;top:346px;width:409px;height:1px;background:#8cbfd6;"></div>
<div class="r" style="left:107px;top:368px;width:409px;height:1px;background:#8cbfd6;"></div>
<div class="r" style="left:107px;top:390px;width:409px;height:1px;background:#8cbfd6;"></div>
<div class="r" style="left:107px;top:412px;width:409px;height:1px;background:#8cbfd6;"></div>
<div class="r" style="left:107px;top:433px;width:409px;height:1px;background:#8cbfd6;"></div>
<div class="r" style="left:107px;top:455px;width:409px;height:1px;background:#8cbfd6;"></div>
<div class="r" style="left:107px;top:477px;width:409px;height:1px;background:#8cbfd6;"></div>
<div class="r" style="left:107px;top:498px;width:409px;height:1px;background:#8cbfd6;"></div>
<div class="r" style="left:107px;top:520px;width:409px;height:1px;background:#8cbfd6;"></div>
<div class="r" style="left:107px;top:542px;width:409px;height:1px;background:#8cbfd6;"></div>
<div class="r" style="left:107px;top:563px;width:409px;height:1px;background:#8cbfd6;"></div>
<div class="r" style="left:107px;top:585px;width:409px;height:1px;background:#8cbfd6;"></div>
<div class="r" style="left:107px;top:607px;width:409px;height:1px;background:#8cbfd6;"></div>
<div class="r" style="left:107px;top:628px;width:409px;height:1px;background:#8cbfd6;"></div>
<div class="r" style="left:107px;top:650px;width:409px;height:1px;background:#8cbfd6;"></div>
<div class="r" style="left:107px;top:303px;width:408px;height:1px;background:#87bfdc;"></div>
<div class="r" style="left:515px;top:303px;width:1px;height:348px;background:#79b7df;"></div>
<svg class="r" style="left:509px;top:645px;" width="6" height="6" viewBox="0 0 6 6"><path d="M5.5 0.5 V5.5 H0.5 Z" fill="#2b5a78"/></svg>
<span class="t" style="left:111.20px;top:284.97px;font-size:14.6px;color:#ffffff;font-weight:bold;letter-spacing:-0.800px;">ID</span>
<span class="t" style="left:180.80px;top:284.97px;font-size:14.6px;color:#ffffff;font-weight:bold;letter-spacing:-0.406px;">Cena netto</span>
<span class="t" style="left:284.40px;top:284.97px;font-size:14.6px;color:#ffffff;font-weight:bold;letter-spacing:-0.844px;">Stawka VAT</span>
<span class="t" style="left:402.50px;top:284.97px;font-size:14.6px;color:#ffffff;font-weight:bold;letter-spacing:-0.460px;">Cena brutto</span>
<div class="r" style="left:160.5px;top:286px;width:15.5px;height:15.5px;background:#f4f4f4;"></div>
<svg class="r" style="left:164.5px;top:292px;" width="8" height="5" viewBox="0 0 8 5"><path d="M0.5 0.5 H7.5 L4 4.2 Z" fill="#6a6a6a"/></svg>
<div class="r" style="left:264.5px;top:286px;width:15.5px;height:15.5px;background:#f4f4f4;"></div>
<svg class="r" style="left:268.5px;top:292px;" width="8" height="5" viewBox="0 0 8 5"><path d="M0.5 0.5 H7.5 L4 4.2 Z" fill="#6a6a6a"/></svg>
<div class="r" style="left:382.5px;top:286px;width:15.5px;height:15.5px;background:#f4f4f4;"></div>
<svg class="r" style="left:386.5px;top:292px;" width="8" height="5" viewBox="0 0 8 5"><path d="M0.5 0.5 H7.5 L4 4.2 Z" fill="#6a6a6a"/></svg>
<div class="r" style="left:498.6px;top:286px;width:15.5px;height:15.5px;background:#f4f4f4;"></div>
<svg class="r" style="left:502.6px;top:292px;" width="8" height="5" viewBox="0 0 8 5"><path d="M0.5 0.5 H7.5 L4 4.2 Z" fill="#6a6a6a"/></svg>
<span class="t" style="left:111.20px;top:306.72px;font-size:14px;color:#17364a;">Towar 1</span>
<span class="t" style="left:215.90px;top:306.72px;font-size:14px;color:#17364a;">120,00 zł</span>
<span class="t" style="left:374.35px;top:306.72px;font-size:14px;color:#17364a;">5%</span>
<span class="t" style="left:111.20px;top:328.42px;font-size:14px;color:#1f1f1f;">Towar 2</span>
<span class="t" style="left:215.90px;top:328.42px;font-size:14px;color:#1f1f1f;">150,00 zł</span>
<span class="t" style="left:374.35px;top:328.42px;font-size:14px;color:#1f1f1f;">8%</span>
<span class="t" style="left:111.20px;top:350.12px;font-size:14px;color:#17364a;">Towar 3</span>
<span class="t" style="left:215.90px;top:350.12px;font-size:14px;color:#17364a;">170,00 zł</span>
<span class="t" style="left:366.60px;top:350.12px;font-size:14px;color:#17364a;">23%</span>
<span class="t" style="left:111.20px;top:371.82px;font-size:14px;color:#1f1f1f;">Towar 4</span>
<span class="t" style="left:217.95px;top:371.82px;font-size:14px;color:#1f1f1f;">111,00 zł</span>
<span class="t" style="left:366.60px;top:371.82px;font-size:14px;color:#1f1f1f;">23%</span>
<span class="t" style="left:111.20px;top:393.52px;font-size:14px;color:#17364a;">Towar 5</span>
<span class="t" style="left:223.65px;top:393.52px;font-size:14px;color:#17364a;">98,00 zł</span>
<span class="t" style="left:366.60px;top:393.52px;font-size:14px;color:#17364a;">23%</span>
<span class="t" style="left:111.20px;top:415.22px;font-size:14px;color:#1f1f1f;">Towar 6</span>
<span class="t" style="left:231.45px;top:415.22px;font-size:14px;color:#1f1f1f;">5,85 zł</span>
<span class="t" style="left:374.35px;top:415.22px;font-size:14px;color:#1f1f1f;">5%</span>
<span class="t" style="left:111.20px;top:436.92px;font-size:14px;color:#17364a;">Towar 7</span>
<span class="t" style="left:223.65px;top:436.92px;font-size:14px;color:#17364a;">75,00 zł</span>
<span class="t" style="left:374.35px;top:436.92px;font-size:14px;color:#17364a;">5%</span>
<span class="t" style="left:111.20px;top:458.62px;font-size:14px;color:#1f1f1f;">Towar 8</span>
<span class="t" style="left:224.70px;top:458.62px;font-size:14px;color:#1f1f1f;">11,23 zł</span>
<span class="t" style="left:366.60px;top:458.62px;font-size:14px;color:#1f1f1f;">23%</span>
<span class="t" style="left:111.20px;top:480.32px;font-size:14px;color:#17364a;">Towar 9</span>
<span class="t" style="left:215.90px;top:480.32px;font-size:14px;color:#17364a;">198,00 zł</span>
<span class="t" style="left:374.35px;top:480.32px;font-size:14px;color:#17364a;">8%</span>
<span class="t" style="left:111.20px;top:502.02px;font-size:14px;color:#1f1f1f;">Towar 10</span>
<span class="t" style="left:223.65px;top:502.02px;font-size:14px;color:#1f1f1f;">99,90 zł</span>
<span class="t" style="left:366.60px;top:502.02px;font-size:14px;color:#1f1f1f;">23%</span>
<span class="t" style="left:111.20px;top:523.72px;font-size:14px;color:#17364a;">Towar 11</span>
<span class="t" style="left:223.65px;top:523.72px;font-size:14px;color:#17364a;">55,45 zł</span>
<span class="t" style="left:366.60px;top:523.72px;font-size:14px;color:#17364a;">23%</span>
<span class="t" style="left:111.20px;top:545.42px;font-size:14px;color:#1f1f1f;">Towar 12</span>
<span class="t" style="left:223.65px;top:545.42px;font-size:14px;color:#1f1f1f;">52,22 zł</span>
<span class="t" style="left:366.60px;top:545.42px;font-size:14px;color:#1f1f1f;">23%</span>
<span class="t" style="left:111.20px;top:567.12px;font-size:14px;color:#17364a;">Towar 13</span>
<span class="t" style="left:215.90px;top:567.12px;font-size:14px;color:#17364a;">105,15 zł</span>
<span class="t" style="left:374.35px;top:567.12px;font-size:14px;color:#17364a;">8%</span>
<span class="t" style="left:111.20px;top:588.82px;font-size:14px;color:#1f1f1f;">Towar 14</span>
<span class="t" style="left:223.65px;top:588.82px;font-size:14px;color:#1f1f1f;">95,85 zł</span>
<span class="t" style="left:374.35px;top:588.82px;font-size:14px;color:#1f1f1f;">0%</span>
<span class="t" style="left:111.20px;top:610.52px;font-size:14px;color:#17364a;">Towar 15</span>
<span class="t" style="left:223.65px;top:610.52px;font-size:14px;color:#17364a;">13,13 zł</span>
<span class="t" style="left:374.35px;top:610.52px;font-size:14px;color:#17364a;">0%</span>
<span class="t" style="left:111.20px;top:632.22px;font-size:14px;color:#1f1f1f;">Towar 16</span>
<span class="t" style="left:215.90px;top:632.22px;font-size:14px;color:#1f1f1f;">228,00 zł</span>
<span class="t" style="left:374.35px;top:632.22px;font-size:14px;color:#1f1f1f;">5%</span>
<span class="t" style="left:137.32px;top:262.52px;font-size:14px;color:#3a3a3a;">A</span>
<span class="t" style="left:223.82px;top:262.52px;font-size:14px;color:#3a3a3a;">B</span>
<span class="t" style="left:333.95px;top:262.52px;font-size:14px;color:#3a3a3a;">C</span>
<span class="t" style="left:451.45px;top:262.52px;font-size:14px;color:#3a3a3a;">D</span>
<span class="t" style="left:544.83px;top:262.52px;font-size:14px;color:#3a3a3a;">E</span>
<span class="t" style="left:614.73px;top:262.52px;font-size:14px;color:#3a3a3a;">F</span>
<span class="t" style="left:683.55px;top:262.52px;font-size:14px;color:#3a3a3a;">G</span>
<span class="t" style="left:753.95px;top:262.52px;font-size:14px;color:#3a3a3a;">H</span>
<span class="t" style="left:827.05px;top:262.52px;font-size:14px;color:#3a3a3a;">I</span>
<span class="t" style="left:895.50px;top:262.52px;font-size:14px;color:#3a3a3a;">J</span>
<span class="t" style="left:964.33px;top:262.52px;font-size:14px;color:#3a3a3a;">K</span>
<span class="t" style="left:1035.10px;top:262.52px;font-size:14px;color:#3a3a3a;">L</span>
<span class="t" style="left:1103.17px;top:262.52px;font-size:14px;color:#3a3a3a;">M</span>
<span class="t" style="left:1172.95px;top:262.52px;font-size:14px;color:#3a3a3a;">N</span>
<span class="t" style="left:87.60px;top:285.12px;font-size:14px;color:#3a3a3a;">1</span>
<span class="t" style="left:87.60px;top:306.82px;font-size:14px;color:#3a3a3a;">2</span>
<span class="t" style="left:87.60px;top:328.52px;font-size:14px;color:#3a3a3a;">3</span>
<span class="t" style="left:87.60px;top:350.22px;font-size:14px;color:#3a3a3a;">4</span>
<span class="t" style="left:87.60px;top:371.92px;font-size:14px;color:#3a3a3a;">5</span>
<span class="t" style="left:87.60px;top:393.62px;font-size:14px;color:#3a3a3a;">6</span>
<span class="t" style="left:87.60px;top:415.32px;font-size:14px;color:#3a3a3a;">7</span>
<span class="t" style="left:87.60px;top:437.02px;font-size:14px;color:#3a3a3a;">8</span>
<span class="t" style="left:87.60px;top:458.72px;font-size:14px;color:#3a3a3a;">9</span>
<span class="t" style="left:83.72px;top:480.42px;font-size:14px;color:#3a3a3a;">10</span>
<span class="t" style="left:84.22px;top:502.12px;font-size:14px;color:#3a3a3a;">11</span>
<span class="t" style="left:83.72px;top:523.82px;font-size:14px;color:#3a3a3a;">12</span>
<span class="t" style="left:83.72px;top:545.52px;font-size:14px;color:#3a3a3a;">13</span>
<span class="t" style="left:83.72px;top:567.22px;font-size:14px;color:#3a3a3a;">14</span>
<span class="t" style="left:83.72px;top:588.92px;font-size:14px;color:#3a3a3a;">15</span>
<span class="t" style="left:83.72px;top:610.62px;font-size:14px;color:#3a3a3a;">16</span>
<span class="t" style="left:83.72px;top:632.32px;font-size:14px;color:#3a3a3a;">17</span>
<span class="t" style="left:83.72px;top:654.02px;font-size:14px;color:#3a3a3a;">18</span>
<span class="t" style="left:83.72px;top:675.72px;font-size:14px;color:#3a3a3a;">19</span>
<div class="r" style="left:397.5px;top:302.5px;width:118px;height:23.5px;border:2px solid #1e6c42;box-sizing:border-box;"></div>
<div class="r" style="left:512px;top:323px;width:5px;height:5px;background:#1e6c42;box-shadow:0 0 0 1px #fff;"></div>
<div class="r" style="left:105.5px;top:303px;width:2px;height:22px;background:#1e6c42;"></div>
<div class="r" style="left:1189px;top:260px;width:20px;height:431px;background:#eef0f1;"></div>
<div class="r" style="left:1190px;top:261px;width:18px;height:430px;background:#fbfbfb;border-radius:7px 7px 0 0;box-shadow:0 0 2px rgba(0,0,0,0.08);"></div>
<svg class="r" style="left:1194px;top:263px;" width="11" height="9" viewBox="0 0 11 9"><path d="M5.5 1 L10 8 H1 Z" fill="#6f6f6f"/></svg>
<div class="r" style="left:1195px;top:276.3px;width:8.6px;height:356.3px;background:#747474;border-radius:4.3px;"></div>
<svg class="r" style="left:1194px;top:680px;" width="11" height="9" viewBox="0 0 11 9"><path d="M1 1 H10 L5.5 8 Z" fill="#6f6f6f"/></svg>
<div class="r" style="left:76px;top:690.5px;width:1133px;height:31px;background:#eef0f1;"></div>
<svg class="r" style="left:99px;top:698px;" width="11" height="13" viewBox="0 0 11 13"><path d="M7.5 2 L3 6.5 L7.5 11" fill="none" stroke="#b0b0b0" stroke-width="1.1"/></svg>
<svg class="r" style="left:130px;top:698px;" width="11" height="13" viewBox="0 0 11 13"><path d="M3.5 2 L8 6.5 L3.5 11" fill="none" stroke="#b0b0b0" stroke-width="1.1"/></svg>
<div class="r" style="left:185.7px;top:690px;width:59px;height:26.6px;background:#fff;border-radius:0 0 5px 5px;box-shadow:0 1px 2px rgba(0,0,0,0.08);"></div>
<span class="t" style="left:192.80px;top:696.58px;font-size:12.2px;color:#242424;font-weight:bold;">Arkusz1</span>
<div class="r" style="left:192px;top:712px;width:46px;height:2.5px;background:#1f7a47;border-radius:1px;"></div>
<div class="r" style="left:249px;top:697.6px;width:1px;height:17px;background:#d0d0d0;"></div>
<svg class="r" style="left:288px;top:699px;" width="12" height="12" viewBox="0 0 12 12"><path d="M6 0.5 V11.5 M0.5 6 H11.5" stroke="#444" stroke-width="1.2"/></svg>
<svg class="r" style="left:756px;top:701px;" width="5" height="12" viewBox="0 0 5 12"><g fill="#333"><rect x="1" y="0.5" width="2.2" height="2.2"/><rect x="1" y="4.3" width="2.2" height="2.2"/><rect x="1" y="8.1" width="2.2" height="2.2"/></g></svg>
<div class="r" style="left:774px;top:697.7px;width:421px;height:14.6px;background:#fbfbfb;border-radius:7px;"></div>
<svg class="r" style="left:777px;top:700.5px;" width="8" height="10" viewBox="0 0 8 10"><path d="M7 0.5 V9 L0.5 4.75 Z" fill="#6f6f6f"/></svg>
<div class="r" style="left:789px;top:701.2px;width:375.4px;height:8px;background:#747474;border-radius:4px;"></div>
<svg class="r" style="left:1179px;top:700.5px;" width="8" height="10" viewBox="0 0 8 10"><path d="M1 0.5 V9 L7.5 4.75 Z" fill="#6f6f6f"/></svg>
<div class="r" style="left:76px;top:721px;width:1133px;height:20.5px;background:#f9f9f9;border-radius:0 0 8px 8px;"></div>
<div class="r" style="left:76px;top:721px;width:1133px;height:1px;background:#dedede;"></div>
<span class="t" style="left:87.40px;top:724.85px;font-size:11.03px;color:#424242;letter-spacing:-0.020px;">Gotowy</span>
<svg class="r" style="left:156px;top:722px;" width="16" height="16" viewBox="0 0 16 16"><g fill="none" stroke="#444" stroke-width="1.1" stroke-linecap="round" stroke-linejoin="round"><circle cx="6.5" cy="2.6" r="1.7"/><path d="M1.5 5.2 C3 6.3 4.5 6.6 6.5 6.6 C8.5 6.6 10 6.3 11.5 5.2"/><path d="M5 6.6 V9.5 L3.8 14.5 M8 6.6 V9"/>
<path d="M8.5 11.5 L10.5 13.8 L14.5 8.5"/></g></svg>
<span class="t" style="left:174.50px;top:724.76px;font-size:11.13px;color:#424242;">Ułatwienia dostępu: dobrze przygotowane</span>
<div class="r" style="left:917px;top:722px;width:35.2px;height:19.5px;background:#e6e6e6;"></div>
<svg class="r" style="left:927px;top:723px;" width="15" height="15" viewBox="0 0 15 15"><g fill="none" stroke="#333" stroke-width="1.1"><rect x="1.5" y="1.5" width="12" height="12"/><line x1="5.5" y1="1.5" x2="5.5" y2="13.5"/><line x1="9.5" y1="1.5" x2="9.5" y2="13.5"/><line x1="1.5" y1="5.5" x2="13.5" y2="5.5"/><line x1="1.5" y1="9.5" x2="13.5" y2="9.5"/></g></svg>
<svg class="r" style="left:964px;top:723px;" width="16" height="15" viewBox="0 0 16 15"><g fill="none" stroke="#333" stroke-width="1"><rect x="1.5" y="1.5" width="13" height="12.5"/><rect x="3.5" y="3.5" width="9" height="8.5"/><line x1="5.5" y1="5.8" x2="10.5" y2="5.8"/><line x1="5.5" y1="7.8" x2="10.5" y2="7.8"/><line x1="5.5" y1="9.8" x2="10.5" y2="9.8"/></g></svg>
<svg class="r" style="left:1002px;top:723px;" width="16" height="15" viewBox="0 0 16 15"><g fill="none" stroke="#333" stroke-width="1.1"><rect x="1.5" y="1.5" width="13" height="12.5"/><path d="M6 1.5 V8.5 H1.5 M10 1.5 V8.5"/></g></svg>
<div class="r" style="left:1035px;top:730.5px;width:6.6px;height:1.2px;background:#444;"></div>
<div class="r" style="left:1046.5px;top:731px;width:94.5px;height:1px;background:#777;"></div>
<div class="r" style="left:1093.7px;top:725.9px;width:5.3px;height:10.9px;background:#6a6a6a;"></div>
<svg class="r" style="left:1145px;top:725px;" width="9" height="12" viewBox="0 0 9 12"><path d="M4.5 0.5 V11.5 M0 6 H9" stroke="#444" stroke-width="1.1"/></svg>
<span class="t" style="left:1166.30px;top:725.31px;font-size:10.42px;color:#424242;letter-spacing:-0.517px;">115%</span>
<div class="r" style="left:74px;top:53px;width:1136px;height:690px;border-radius:9px;box-sizing:border-box;border:1.5px solid rgba(50,140,100,0.75);border-top:none;pointer-events:none"></div>
</body></html>
